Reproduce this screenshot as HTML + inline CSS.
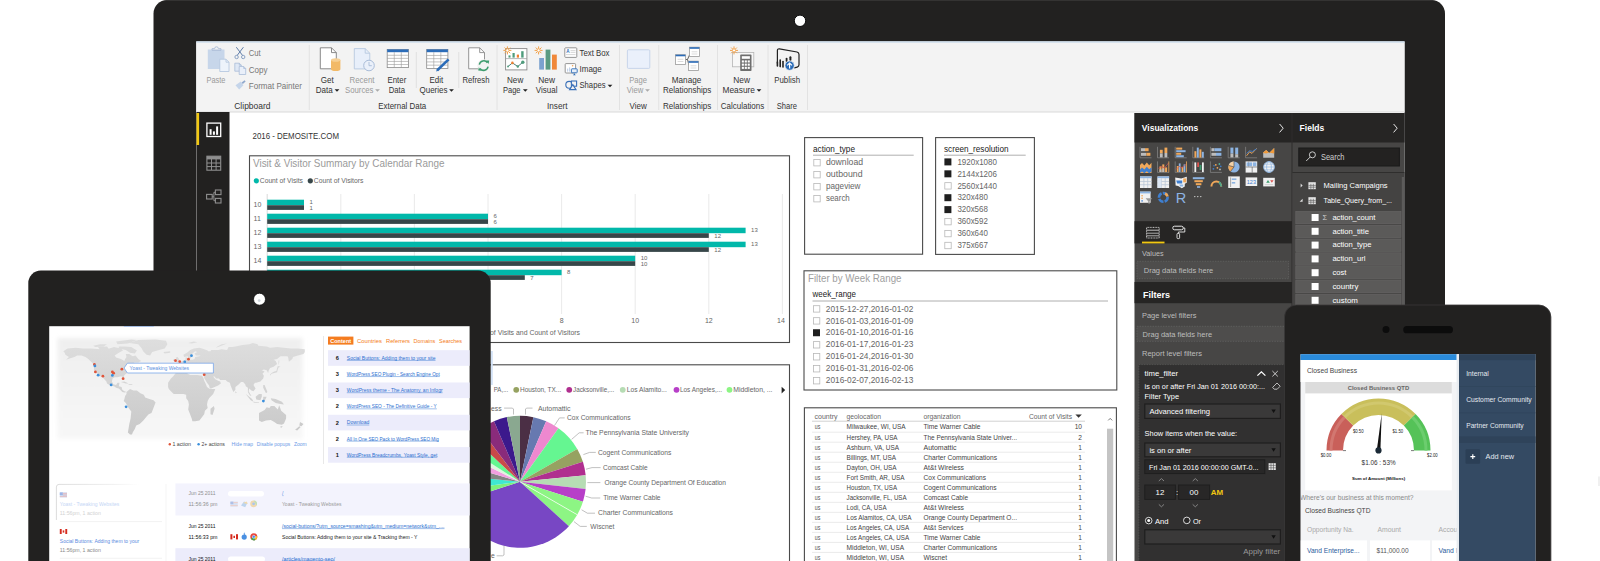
<!DOCTYPE html>
<html><head><meta charset="utf-8"><title>Dashboard devices</title>
<style>
html,body{margin:0;padding:0;background:#fff;overflow:hidden}
svg{display:block;font-family:"Liberation Sans", sans-serif}
text{white-space:pre}
</style></head><body>
<svg width="1600" height="561" viewBox="0 0 1600 561">
<rect width="1600" height="561" fill="#fff"/>
<!-- p1_frame -->
<rect x="153.5" y="0" width="1291.5" height="700" rx="13.5" fill="#222120"/>
<rect x="166.00" y="0.00" width="1266.00" height="1.00" fill="#343332"/>
<rect x="196.30" y="41.50" width="1208.20" height="600.00" fill="#fff"/>
<circle cx="800.00" cy="20.80" r="5.70" fill="#fff" stroke="#0a0a0a" stroke-width="1"/>
<rect x="196.30" y="41.50" width="1208.20" height="70.50" fill="#f3f3f3"/>
<rect x="196.30" y="41.50" width="1208.20" height="1.00" fill="#bcd3ea"/>
<rect x="196.50" y="111.50" width="1208.00" height="1.00" fill="#dadada"/>
<line x1="309.25" y1="45.00" x2="309.25" y2="110.00" stroke="#e2e2e2" stroke-width="1"/>
<line x1="497.00" y1="45.00" x2="497.00" y2="110.00" stroke="#e2e2e2" stroke-width="1"/>
<line x1="619.50" y1="45.00" x2="619.50" y2="110.00" stroke="#e2e2e2" stroke-width="1"/>
<line x1="658.75" y1="45.00" x2="658.75" y2="110.00" stroke="#e2e2e2" stroke-width="1"/>
<line x1="717.50" y1="45.00" x2="717.50" y2="110.00" stroke="#e2e2e2" stroke-width="1"/>
<line x1="768.00" y1="45.00" x2="768.00" y2="110.00" stroke="#e2e2e2" stroke-width="1"/>
<line x1="807.50" y1="45.00" x2="807.50" y2="110.00" stroke="#e2e2e2" stroke-width="1"/>
<line x1="416.25" y1="52.00" x2="416.25" y2="88.00" stroke="#e0e0e0" stroke-width="1"/>
<line x1="458.75" y1="52.00" x2="458.75" y2="88.00" stroke="#e0e0e0" stroke-width="1"/>
<text x="206.50" y="82.84" font-size="8.6" fill="#9a9a9a" textLength="19.00" lengthAdjust="spacingAndGlyphs">Paste</text>
<text x="248.75" y="55.84" font-size="8.6" fill="#777" textLength="12.00" lengthAdjust="spacingAndGlyphs">Cut</text>
<text x="248.75" y="72.54" font-size="8.6" fill="#777" textLength="18.75" lengthAdjust="spacingAndGlyphs">Copy</text>
<text x="248.75" y="88.84" font-size="8.6" fill="#777" textLength="53.25" lengthAdjust="spacingAndGlyphs">Format Painter</text>
<text x="234.25" y="109.14" font-size="8.6" fill="#333" textLength="36.25" lengthAdjust="spacingAndGlyphs">Clipboard</text>
<text x="320.75" y="82.84" font-size="8.6" fill="#333" textLength="13.00" lengthAdjust="spacingAndGlyphs">Get</text>
<text x="315.75" y="92.84" font-size="8.6" fill="#333" textLength="17.00" lengthAdjust="spacingAndGlyphs">Data</text>
<text x="349.50" y="82.84" font-size="8.6" fill="#9a9a9a" textLength="25.00" lengthAdjust="spacingAndGlyphs">Recent</text>
<text x="345.00" y="92.84" font-size="8.6" fill="#9a9a9a" textLength="28.50" lengthAdjust="spacingAndGlyphs">Sources</text>
<text x="387.50" y="82.84" font-size="8.6" fill="#333" textLength="18.75" lengthAdjust="spacingAndGlyphs">Enter</text>
<text x="388.75" y="92.84" font-size="8.6" fill="#333" textLength="16.25" lengthAdjust="spacingAndGlyphs">Data</text>
<text x="429.50" y="82.84" font-size="8.6" fill="#333" textLength="13.75" lengthAdjust="spacingAndGlyphs">Edit</text>
<text x="419.50" y="92.84" font-size="8.6" fill="#333" textLength="28.00" lengthAdjust="spacingAndGlyphs">Queries</text>
<text x="462.50" y="82.84" font-size="8.6" fill="#333" textLength="27.00" lengthAdjust="spacingAndGlyphs">Refresh</text>
<text x="378.25" y="109.14" font-size="8.6" fill="#333" textLength="48.00" lengthAdjust="spacingAndGlyphs">External Data</text>
<text x="507.00" y="82.84" font-size="8.6" fill="#333" textLength="16.25" lengthAdjust="spacingAndGlyphs">New</text>
<text x="503.00" y="92.84" font-size="8.6" fill="#333" textLength="17.50" lengthAdjust="spacingAndGlyphs">Page</text>
<text x="538.25" y="82.84" font-size="8.6" fill="#333" textLength="16.75" lengthAdjust="spacingAndGlyphs">New</text>
<text x="535.75" y="92.84" font-size="8.6" fill="#333" textLength="21.75" lengthAdjust="spacingAndGlyphs">Visual</text>
<text x="579.50" y="55.84" font-size="8.6" fill="#333" textLength="30.00" lengthAdjust="spacingAndGlyphs">Text Box</text>
<text x="579.50" y="72.34" font-size="8.6" fill="#333" textLength="22.25" lengthAdjust="spacingAndGlyphs">Image</text>
<text x="579.50" y="88.34" font-size="8.6" fill="#333" textLength="26.00" lengthAdjust="spacingAndGlyphs">Shapes</text>
<text x="547.00" y="109.14" font-size="8.6" fill="#333" textLength="20.50" lengthAdjust="spacingAndGlyphs">Insert</text>
<text x="629.25" y="82.84" font-size="8.6" fill="#9a9a9a" textLength="17.75" lengthAdjust="spacingAndGlyphs">Page</text>
<text x="626.75" y="92.84" font-size="8.6" fill="#9a9a9a" textLength="16.50" lengthAdjust="spacingAndGlyphs">View</text>
<text x="629.50" y="109.14" font-size="8.6" fill="#333" textLength="17.25" lengthAdjust="spacingAndGlyphs">View</text>
<text x="671.75" y="82.84" font-size="8.6" fill="#333" textLength="29.50" lengthAdjust="spacingAndGlyphs">Manage</text>
<text x="663.00" y="92.84" font-size="8.6" fill="#333" textLength="48.25" lengthAdjust="spacingAndGlyphs">Relationships</text>
<text x="663.00" y="109.14" font-size="8.6" fill="#333" textLength="48.25" lengthAdjust="spacingAndGlyphs">Relationships</text>
<text x="733.25" y="82.84" font-size="8.6" fill="#333" textLength="16.75" lengthAdjust="spacingAndGlyphs">New</text>
<text x="722.50" y="92.84" font-size="8.6" fill="#333" textLength="32.50" lengthAdjust="spacingAndGlyphs">Measure</text>
<text x="720.75" y="109.14" font-size="8.6" fill="#333" textLength="43.50" lengthAdjust="spacingAndGlyphs">Calculations</text>
<text x="774.25" y="82.84" font-size="8.6" fill="#333" textLength="25.75" lengthAdjust="spacingAndGlyphs">Publish</text>
<text x="776.75" y="109.14" font-size="8.6" fill="#333" textLength="20.25" lengthAdjust="spacingAndGlyphs">Share</text>
<path d="M334.60 89.30h4.8l-2.4 2.5z" fill="#222"/>
<path d="M375.10 89.30h4.8l-2.4 2.5z" fill="#aaa"/>
<path d="M449.10 89.30h4.8l-2.4 2.5z" fill="#222"/>
<path d="M522.90 89.30h4.8l-2.4 2.5z" fill="#222"/>
<path d="M607.60 84.80h4.8l-2.4 2.5z" fill="#222"/>
<path d="M645.10 89.30h4.8l-2.4 2.5z" fill="#aaa"/>
<path d="M756.60 89.30h4.8l-2.4 2.5z" fill="#222"/>
<rect x="196.50" y="112.00" width="33.00" height="530.00" fill="#222120"/>
<rect x="196.50" y="113.00" width="2.60" height="32.00" fill="#f2c811"/>
<!-- p1_icons -->
<rect x="207.80" y="49.50" width="16.70" height="19.50" fill="#c7d6ea"/>
<path d="M212 50.3v-1.6h2.6a1.9 1.9 0 0 1 3.8 0h2.6v1.6z" fill="none" stroke="#aebfd9" stroke-width="1"/>
<path d="M219.8 59.2h6.199999999999999l3 3v9.3h-9.2z" fill="#edf3fb" stroke="#b7c8e0" stroke-width="0.9"/><path d="M226.0 59.2v3h3" fill="none" stroke="#b7c8e0" stroke-width="0.9"/>
<path d="M236.3 47.2L242.6 55.5M243.4 47.2L237.1 55.5" stroke="#5f7da8" stroke-width="1" fill="none"/>
<circle cx="236.6" cy="57" r="1.7" fill="none" stroke="#7f98bd" stroke-width="0.9"/><circle cx="243.2" cy="57" r="1.7" fill="none" stroke="#7f98bd" stroke-width="0.9"/>
<path d="M234.8 63.2h4.5l2 2v6h-6.5z" fill="#dfe8f5" stroke="#a9bcd8" stroke-width="0.8"/><path d="M239.3 63.2v2h2" fill="none" stroke="#a9bcd8" stroke-width="0.8"/>
<path d="M239.2 66.5h4.5l2 2v6h-6.5z" fill="#e9eff9" stroke="#a9bcd8" stroke-width="0.8"/><path d="M243.7 66.5v2h2" fill="none" stroke="#a9bcd8" stroke-width="0.8"/>
<path d="M235.5 85.2l5.3-3.6 2.6 3.6-4.2 4.3z" fill="#c5d5ea"/><path d="M241.6 82.6l3-2.4 1 1.2-2.8 2.6z" fill="#8fa8cc"/>
<path d="M320.3 47.8h11.2l4.8 4.8v16.2h-16z" fill="#fff" stroke="#7d7d7d" stroke-width="0.9"/><path d="M331.5 47.8v4.8h4.8" fill="none" stroke="#7d7d7d" stroke-width="0.9"/>
<path d="M331 60v9.2a4.7 1.8 0 0 0 9.4 0v-9.2z" fill="#f2b967"/><ellipse cx="335.7" cy="60" rx="4.7" ry="1.8" fill="#f6cf94"/>
<path d="M354.3 48.6h10.9l4.6 4.6v15.700000000000001h-15.5z" fill="#e8effa" stroke="#b7c8e0" stroke-width="0.9"/><path d="M365.2 48.6v4.6h4.6" fill="none" stroke="#b7c8e0" stroke-width="0.9"/>
<circle cx="369" cy="65.5" r="5.3" fill="#eaf0fa" stroke="#a9bcd8" stroke-width="1"/><path d="M369 62v3.7h2.8" stroke="#a9bcd8" stroke-width="0.9" fill="none"/>
<rect x="387.20" y="49.40" width="21.20" height="18.20" fill="#fff" stroke="#8a8a8a" stroke-width="0.8"/><rect x="387.20" y="49.40" width="21.20" height="2.80" fill="#2b6cb8"/><line x1="387.20" y1="55.28" x2="408.40" y2="55.28" stroke="#9a9a9a" stroke-width="0.6"/><line x1="387.20" y1="58.36" x2="408.40" y2="58.36" stroke="#9a9a9a" stroke-width="0.6"/><line x1="387.20" y1="61.44" x2="408.40" y2="61.44" stroke="#9a9a9a" stroke-width="0.6"/><line x1="387.20" y1="64.52" x2="408.40" y2="64.52" stroke="#9a9a9a" stroke-width="0.6"/><line x1="394.27" y1="52.20" x2="394.27" y2="67.60" stroke="#9a9a9a" stroke-width="0.6"/><line x1="401.33" y1="52.20" x2="401.33" y2="67.60" stroke="#9a9a9a" stroke-width="0.6"/>
<rect x="426.70" y="49.40" width="21.20" height="19.00" fill="#fff" stroke="#8a8a8a" stroke-width="0.8"/><rect x="426.70" y="49.40" width="21.20" height="2.80" fill="#2b6cb8"/><line x1="426.70" y1="55.44" x2="447.90" y2="55.44" stroke="#9a9a9a" stroke-width="0.6"/><line x1="426.70" y1="58.68" x2="447.90" y2="58.68" stroke="#9a9a9a" stroke-width="0.6"/><line x1="426.70" y1="61.92" x2="447.90" y2="61.92" stroke="#9a9a9a" stroke-width="0.6"/><line x1="426.70" y1="65.16" x2="447.90" y2="65.16" stroke="#9a9a9a" stroke-width="0.6"/><line x1="433.77" y1="52.20" x2="433.77" y2="68.40" stroke="#9a9a9a" stroke-width="0.6"/><line x1="440.83" y1="52.20" x2="440.83" y2="68.40" stroke="#9a9a9a" stroke-width="0.6"/>
<path d="M437.3 70.2L448.6 59.4" stroke="#2b6cb8" stroke-width="2.6" stroke-linecap="butt"/><path d="M436.2 71.4l0.6-2.2 1.7 1.6z" fill="#2b6cb8"/>
<path d="M468.7 47.8h11.0l4.8 4.8v16.2h-15.8z" fill="#fff" stroke="#8a8a8a" stroke-width="0.9"/><path d="M479.7 47.8v4.8h4.8" fill="none" stroke="#8a8a8a" stroke-width="0.9"/>
<circle cx="483.7" cy="65.6" r="6.4" fill="#f3f3f3"/>
<path d="M479.3 64.6a4.6 4.6 0 0 1 8.2 -1.9M488.1 66.6a4.6 4.6 0 0 1 -8.2 1.9" stroke="#3d9c6e" stroke-width="1.5" fill="none"/>
<path d="M486.2 60.4l3 0.2-0.6 3.4z" fill="#3d9c6e"/><path d="M481.2 70.8l-3-0.2 0.6-3.4z" fill="#3d9c6e"/>
<rect x="505.60" y="48.60" width="21.30" height="21.30" fill="#fff" stroke="#8a8a8a" stroke-width="0.9"/>
<line x1="505.60" y1="58.60" x2="526.90" y2="58.60" stroke="#9a9a9a" stroke-width="0.7"/>
<rect x="512.50" y="53.00" width="2.20" height="4.60" fill="#4f9c7c"/><rect x="516.80" y="54.60" width="2.20" height="3.00" fill="#f08030"/><rect x="521.20" y="51.20" width="2.40" height="6.40" fill="#4f9c7c"/><rect x="508.50" y="55.40" width="2.00" height="2.20" fill="#4f9c7c"/>
<path d="M508 66.5l4.4-3.6 5.4 3.6 5-4.3" stroke="#4a7f78" stroke-width="1" fill="none"/>
<circle cx="512.40" cy="62.90" r="1.30" fill="#f08030"/><circle cx="517.80" cy="66.50" r="1.20" fill="#4f9c7c"/><circle cx="522.80" cy="62.20" r="1.70" fill="#4f9c7c"/><circle cx="508.00" cy="66.50" r="0.90" fill="#4f9c7c"/>
<path d="M509.00 50.40L511.40 50.40M508.53 51.53L510.23 53.23M507.40 52.00L507.40 54.40M506.27 51.53L504.57 53.23M505.80 50.40L503.40 50.40M506.27 49.27L504.57 47.57M507.40 48.80L507.40 46.40M508.53 49.27L510.23 47.57" stroke="#f2a24a" stroke-width="1" fill="none"/><circle cx="507.4" cy="50.4" r="1.6" fill="#fff" stroke="#f2a24a" stroke-width="0.9"/>
<rect x="539.20" y="58.00" width="4.80" height="11.60" fill="#7ca2cf"/><rect x="545.60" y="49.60" width="4.80" height="20.00" fill="#5a9b82"/><rect x="552.00" y="54.60" width="4.80" height="15.00" fill="#f0883a"/>
<path d="M540.20 50.40L542.60 50.40M539.73 51.53L541.43 53.23M538.60 52.00L538.60 54.40M537.47 51.53L535.77 53.23M537.00 50.40L534.60 50.40M537.47 49.27L535.77 47.57M538.60 48.80L538.60 46.40M539.73 49.27L541.43 47.57" stroke="#f2a24a" stroke-width="1" fill="none"/><circle cx="538.6" cy="50.4" r="1.6" fill="#fff" stroke="#f2a24a" stroke-width="0.9"/>
<rect x="564.80" y="47.80" width="12.00" height="9.60" fill="#fff" stroke="#8a8a8a" stroke-width="0.9" rx="0.8"/>
<text x="566.20" y="53.20" font-size="4.6" fill="#2b6cb8" font-weight="bold">A</text>
<line x1="570.50" y1="50.60" x2="575.50" y2="50.60" stroke="#c7c7c7" stroke-width="0.7"/><line x1="570.50" y1="52.40" x2="575.50" y2="52.40" stroke="#c7c7c7" stroke-width="0.7"/><line x1="566.00" y1="54.60" x2="575.50" y2="54.60" stroke="#c7c7c7" stroke-width="0.7"/>
<rect x="565.20" y="63.60" width="10.40" height="9.40" fill="#fff" stroke="#8a8a8a" stroke-width="0.9" rx="0.8"/>
<circle cx="572.60" cy="65.80" r="0.80" fill="#f0a050"/><rect x="567.00" y="68.60" width="1.20" height="3.00" fill="#c3d3ea"/><rect x="569.00" y="67.40" width="1.20" height="4.20" fill="#c3d3ea"/>
<rect x="571.40" y="68.80" width="5.80" height="4.00" fill="#e6eef9" stroke="#2b6cb8" stroke-width="0.9" rx="0.6"/><path d="M573 75.2h2.8l-1.4-1.8z" fill="#2b6cb8"/>
<circle cx="569.20" cy="84.80" r="3.40" fill="none" stroke="#3a70b8" stroke-width="1.1"/>
<rect x="571.40" y="81.00" width="5.20" height="5.20" fill="#f3f3f3" stroke="#3a70b8" stroke-width="1.1"/>
<path d="M569.6 89.6l3.2-5 3.2 5z" fill="#f3f3f3" stroke="#3a70b8" stroke-width="1.1"/>
<rect x="627.40" y="49.80" width="22.40" height="18.60" fill="#eaf0fb" stroke="#c3d1e9" stroke-width="0.9" rx="1"/>
<path d="M685.5 59.5h2l2-4.5M687.5 59.5l1.5 5.8" stroke="#555" stroke-width="0.9" fill="none"/>
<rect x="675.60" y="54.70" width="9.80" height="9.70" fill="#fff" stroke="#9a9a9a" stroke-width="0.8"/><rect x="675.60" y="54.70" width="9.80" height="1.60" fill="#2b6cb8"/><line x1="677.60" y1="59.30" x2="683.40" y2="59.30" stroke="#ccc" stroke-width="0.7"/><line x1="677.60" y1="61.50" x2="683.40" y2="61.50" stroke="#ccc" stroke-width="0.7"/><rect x="689.60" y="47.20" width="9.80" height="9.30" fill="#fff" stroke="#9a9a9a" stroke-width="0.8"/><rect x="689.60" y="47.20" width="9.80" height="1.60" fill="#2b6cb8"/><line x1="691.60" y1="51.80" x2="697.40" y2="51.80" stroke="#ccc" stroke-width="0.7"/><line x1="691.60" y1="54.00" x2="697.40" y2="54.00" stroke="#ccc" stroke-width="0.7"/><rect x="688.60" y="61.20" width="9.80" height="9.30" fill="#fff" stroke="#9a9a9a" stroke-width="0.8"/><rect x="688.60" y="61.20" width="9.80" height="1.60" fill="#2b6cb8"/><line x1="690.60" y1="65.80" x2="696.40" y2="65.80" stroke="#ccc" stroke-width="0.7"/><line x1="690.60" y1="68.00" x2="696.40" y2="68.00" stroke="#ccc" stroke-width="0.7"/>
<rect x="732.40" y="52.40" width="21.40" height="14.40" fill="#f7f7f7" stroke="#b5b5b5" stroke-width="0.8"/>
<rect x="740.20" y="54.60" width="11.30" height="16.40" fill="#6e6e6e" rx="0.8"/>
<rect x="741.80" y="56.20" width="8.10" height="2.60" fill="#fff"/>
<rect x="741.80" y="60.40" width="2.10" height="2.10" fill="#fff"/>
<rect x="744.75" y="60.40" width="2.10" height="2.10" fill="#fff"/>
<rect x="747.70" y="60.40" width="2.10" height="2.10" fill="#fff"/>
<rect x="741.80" y="63.60" width="2.10" height="2.10" fill="#fff"/>
<rect x="744.75" y="63.60" width="2.10" height="2.10" fill="#fff"/>
<rect x="747.70" y="63.60" width="2.10" height="2.10" fill="#fff"/>
<rect x="741.80" y="66.80" width="2.10" height="2.10" fill="#fff"/>
<rect x="744.75" y="66.80" width="2.10" height="2.10" fill="#fff"/>
<rect x="747.70" y="66.80" width="2.10" height="2.10" fill="#fff"/>
<path d="M735.60 50.40L738.00 50.40M735.13 51.53L736.83 53.23M734.00 52.00L734.00 54.40M732.87 51.53L731.17 53.23M732.40 50.40L730.00 50.40M732.87 49.27L731.17 47.57M734.00 48.80L734.00 46.40M735.13 49.27L736.83 47.57" stroke="#f2a24a" stroke-width="1" fill="none"/><circle cx="734" cy="50.4" r="1.6" fill="#fff" stroke="#f2a24a" stroke-width="0.9"/>
<path d="M777.4 63.5V50.6q0-2 2-1.8l17.6 3.2q2 .5 2 2.4v10.4q0 1.8-1.8 2.3l-3 .8" fill="none" stroke="#222" stroke-width="1.2"/>
<line x1="777.40" y1="62.00" x2="777.40" y2="66.00" stroke="#222" stroke-width="1.6" stroke-linecap="round"/><line x1="780.20" y1="60.00" x2="780.20" y2="66.60" stroke="#222" stroke-width="1.6" stroke-linecap="round"/><line x1="783.00" y1="61.50" x2="783.00" y2="67.00" stroke="#222" stroke-width="1.6" stroke-linecap="round"/>
<line x1="786.60" y1="58.60" x2="786.60" y2="61.00" stroke="#222" stroke-width="1.8" stroke-linecap="round"/><line x1="790.40" y1="57.20" x2="790.40" y2="60.00" stroke="#222" stroke-width="2" stroke-linecap="round"/>
<circle cx="789.60" cy="65.60" r="4.70" fill="#2b6cb8" stroke="#f3f3f3" stroke-width="0.8"/>
<path d="M789.6 68.6v-5.4M787.2 65.4l2.4-2.4 2.4 2.4" stroke="#fff" stroke-width="1.2" fill="none"/>
<rect x="206.90" y="123.10" width="13.80" height="13.40" fill="none" stroke="#fff" stroke-width="1.3"/>
<rect x="209.60" y="129.20" width="2.00" height="5.60" fill="#fff"/><rect x="212.90" y="131.40" width="2.00" height="3.40" fill="#fff"/><rect x="216.10" y="126.40" width="2.00" height="8.40" fill="#fff"/>
<rect x="206.90" y="156.20" width="13.80" height="14.00" fill="none" stroke="#8f8f8f" stroke-width="1.1"/><rect x="206.90" y="156.20" width="13.80" height="3.20" fill="#8f8f8f"/>
<line x1="206.90" y1="163.00" x2="220.70" y2="163.00" stroke="#8f8f8f" stroke-width="1"/><line x1="206.90" y1="166.60" x2="220.70" y2="166.60" stroke="#8f8f8f" stroke-width="1"/><line x1="211.50" y1="159.00" x2="211.50" y2="170.00" stroke="#8f8f8f" stroke-width="1"/><line x1="216.10" y1="159.00" x2="216.10" y2="170.00" stroke="#8f8f8f" stroke-width="1"/>
<rect x="206.60" y="194.40" width="5.60" height="4.60" fill="none" stroke="#8f8f8f" stroke-width="1.1"/><rect x="215.40" y="190.00" width="5.60" height="4.60" fill="none" stroke="#8f8f8f" stroke-width="1.1"/><rect x="215.40" y="198.40" width="5.60" height="4.60" fill="none" stroke="#8f8f8f" stroke-width="1.1"/>
<path d="M212.2 196.7h1.7v-4.4h1.5M213.9 196.7v4h1.5" stroke="#8f8f8f" stroke-width="1" fill="none"/>
<!-- p2_charts -->
<text x="252.50" y="139.04" font-size="8.6" fill="#333" textLength="86.50" lengthAdjust="spacingAndGlyphs">2016 - DEMOSITE.COM</text>
<rect x="249.50" y="155.80" width="540.00" height="186.70" fill="#fff" stroke="#4a4a4a" stroke-width="1.1"/>
<text x="253.00" y="166.63" font-size="11" fill="#9a9a9a" textLength="191.50" lengthAdjust="spacingAndGlyphs">Visit &amp; Visitor Summary by Calendar Range</text>
<circle cx="256.30" cy="180.80" r="2.60" fill="#01b8aa"/><text x="259.80" y="182.98" font-size="6.6" fill="#666" textLength="43.20" lengthAdjust="spacingAndGlyphs">Count of Visits</text>
<circle cx="310.30" cy="180.80" r="2.60" fill="#374649"/><text x="313.80" y="182.98" font-size="6.6" fill="#666" textLength="49.60" lengthAdjust="spacingAndGlyphs">Count of Visitors</text>
<line x1="267.20" y1="194.00" x2="267.20" y2="314.00" stroke="#cfcfcf" stroke-width="0.8"/>
<line x1="340.80" y1="194.00" x2="340.80" y2="314.00" stroke="#e4e4e4" stroke-width="0.8"/>
<line x1="414.40" y1="194.00" x2="414.40" y2="314.00" stroke="#e4e4e4" stroke-width="0.8"/>
<line x1="488.00" y1="194.00" x2="488.00" y2="314.00" stroke="#e4e4e4" stroke-width="0.8"/>
<line x1="561.60" y1="194.00" x2="561.60" y2="314.00" stroke="#e4e4e4" stroke-width="0.8"/>
<line x1="635.20" y1="194.00" x2="635.20" y2="314.00" stroke="#e4e4e4" stroke-width="0.8"/>
<line x1="708.80" y1="194.00" x2="708.80" y2="314.00" stroke="#e4e4e4" stroke-width="0.8"/>
<line x1="782.40" y1="194.00" x2="782.40" y2="314.00" stroke="#e4e4e4" stroke-width="0.8"/>
<text x="561.60" y="322.61" font-size="7" fill="#666" text-anchor="middle">8</text>
<text x="635.20" y="322.61" font-size="7" fill="#666" text-anchor="middle">10</text>
<text x="708.80" y="322.61" font-size="7" fill="#666" text-anchor="middle">12</text>
<text x="780.90" y="322.61" font-size="7" fill="#666" text-anchor="middle">14</text>
<text x="490.00" y="335.31" font-size="7" fill="#666" textLength="90.00" lengthAdjust="spacingAndGlyphs">of Visits and Count of Visitors</text>
<rect x="267.20" y="199.70" width="36.80" height="5.50" fill="#01b8aa"/>
<rect x="267.20" y="205.20" width="36.80" height="4.70" fill="#374649"/>
<text x="253.60" y="207.21" font-size="7" fill="#666">10</text>
<text x="309.50" y="203.88" font-size="6" fill="#666">1</text>
<text x="309.50" y="210.08" font-size="6" fill="#666">1</text>
<rect x="267.20" y="213.70" width="220.80" height="5.50" fill="#01b8aa"/>
<rect x="267.20" y="219.20" width="220.80" height="4.70" fill="#374649"/>
<text x="253.60" y="221.21" font-size="7" fill="#666">11</text>
<text x="493.50" y="217.88" font-size="6" fill="#666">6</text>
<text x="493.50" y="224.08" font-size="6" fill="#666">6</text>
<rect x="267.20" y="227.70" width="478.40" height="5.50" fill="#01b8aa"/>
<rect x="267.20" y="233.20" width="441.60" height="4.70" fill="#374649"/>
<text x="253.60" y="235.21" font-size="7" fill="#666">12</text>
<text x="751.10" y="231.88" font-size="6" fill="#666">13</text>
<text x="714.30" y="238.08" font-size="6" fill="#666">12</text>
<rect x="267.20" y="241.70" width="478.40" height="5.50" fill="#01b8aa"/>
<rect x="267.20" y="247.20" width="441.60" height="4.70" fill="#374649"/>
<text x="253.60" y="249.21" font-size="7" fill="#666">13</text>
<text x="751.10" y="245.88" font-size="6" fill="#666">13</text>
<text x="714.30" y="252.08" font-size="6" fill="#666">12</text>
<rect x="267.20" y="255.70" width="368.00" height="5.50" fill="#01b8aa"/>
<rect x="267.20" y="261.20" width="368.00" height="4.70" fill="#374649"/>
<text x="253.60" y="263.21" font-size="7" fill="#666">14</text>
<text x="640.70" y="259.88" font-size="6" fill="#666">10</text>
<text x="640.70" y="266.08" font-size="6" fill="#666">10</text>
<rect x="267.20" y="269.70" width="294.40" height="5.50" fill="#01b8aa"/>
<rect x="267.20" y="275.20" width="257.60" height="4.70" fill="#374649"/>
<text x="253.60" y="277.21" font-size="7" fill="#666">15</text>
<text x="567.10" y="273.88" font-size="6" fill="#666">8</text>
<text x="530.30" y="280.08" font-size="6" fill="#666">7</text>
<rect x="267.20" y="283.70" width="184.00" height="5.50" fill="#01b8aa"/>
<rect x="267.20" y="289.20" width="184.00" height="4.70" fill="#374649"/>
<text x="253.60" y="291.21" font-size="7" fill="#666">16</text>
<text x="456.70" y="287.88" font-size="6" fill="#666">5</text>
<text x="456.70" y="294.08" font-size="6" fill="#666">5</text>
<rect x="249.50" y="364.80" width="540.00" height="260.00" fill="#fff" stroke="#4a4a4a" stroke-width="1.1"/>
<rect x="491.00" y="351.00" width="1.80" height="34.00" fill="#d3e2f6"/>
<text x="493.75" y="392.11" font-size="7" fill="#666" textLength="14.50" lengthAdjust="spacingAndGlyphs">PA,...</text>
<circle cx="516.25" cy="389.80" r="2.90" fill="#96a261"/><text x="520.00" y="392.11" font-size="7" fill="#666" textLength="41.25" lengthAdjust="spacingAndGlyphs">Houston, TX...</text>
<circle cx="569.25" cy="389.80" r="2.90" fill="#b02f8f"/><text x="573.00" y="392.11" font-size="7" fill="#666" textLength="41.25" lengthAdjust="spacingAndGlyphs">Jacksonville,...</text>
<circle cx="622.75" cy="389.80" r="2.90" fill="#b6dcb4"/><text x="626.75" y="392.11" font-size="7" fill="#666" textLength="40.00" lengthAdjust="spacingAndGlyphs">Los Alamito...</text>
<circle cx="676.50" cy="389.80" r="2.90" fill="#b73fc8"/><text x="680.00" y="392.11" font-size="7" fill="#666" textLength="42.00" lengthAdjust="spacingAndGlyphs">Los Angeles,...</text>
<circle cx="729.50" cy="389.80" r="2.90" fill="#8df584"/><text x="733.25" y="392.11" font-size="7" fill="#666" textLength="39.25" lengthAdjust="spacingAndGlyphs">Middleton, ...</text>
<path d="M781.6 386.8l3.6 3.3-3.6 3.3z" fill="#222"/>
<path d="M520.00 481.80L520.00 415.80A66 66 0 0 1 533.38 417.17z" fill="#4b2f45"/>
<path d="M520.00 481.80L533.38 417.17A66 66 0 0 1 546.21 421.23z" fill="#6779b0"/>
<path d="M520.00 481.80L546.21 421.23A66 66 0 0 1 558.51 428.20z" fill="#ee88cf"/>
<path d="M520.00 481.80L558.51 428.20A66 66 0 0 1 577.22 448.90z" fill="#65f691"/>
<path d="M520.00 481.80L577.22 448.90A66 66 0 0 1 582.91 461.84z" fill="#96a261"/>
<path d="M520.00 481.80L582.91 461.84A66 66 0 0 1 585.67 475.24z" fill="#b02f8f"/>
<path d="M520.00 481.80L585.67 475.24A66 66 0 0 1 585.61 488.93z" fill="#b6dcb4"/>
<path d="M520.00 481.80L585.61 488.93A66 66 0 0 1 582.91 501.76z" fill="#b73fc8"/>
<path d="M520.00 481.80L582.91 501.76A66 66 0 0 1 577.22 514.70z" fill="#8df584"/>
<path d="M520.00 481.80L577.22 514.70A66 66 0 0 1 568.89 526.13z" fill="#8df584"/>
<path d="M520.00 481.80L568.89 526.13A66 66 0 0 1 457.23 502.20z" fill="#7847c4"/>
<path d="M520.00 481.80L457.23 502.20A66 66 0 0 1 454.53 490.19z" fill="#7df07c"/>
<path d="M520.00 481.80L454.53 490.19A66 66 0 0 1 454.33 475.24z" fill="#3fe8d2"/>
<path d="M520.00 481.80L454.33 475.24A66 66 0 0 1 456.72 463.05z" fill="#858585"/>
<path d="M520.00 481.80L456.72 463.05A66 66 0 0 1 460.68 452.87z" fill="#f19fe0"/>
<path d="M520.00 481.80L460.68 452.87A66 66 0 0 1 464.46 446.14z" fill="#dff6df"/>
<path d="M520.00 481.80L464.46 446.14A66 66 0 0 1 471.73 436.79z" fill="#65f691"/>
<path d="M520.00 481.80L471.73 436.79A66 66 0 0 1 480.28 429.09z" fill="#c94a48"/>
<path d="M520.00 481.80L480.28 429.09A66 66 0 0 1 494.00 421.14z" fill="#8a2b7b"/>
<path d="M520.00 481.80L494.00 421.14A66 66 0 0 1 506.84 417.12z" fill="#3c198c"/>
<path d="M520.00 481.80L506.84 417.12A66 66 0 0 1 520.00 415.80z" fill="#8aa890"/>
<line x1="520.00" y1="481.80" x2="577.22" y2="514.70" stroke="#fff" stroke-width="0.7"/>
<text x="538.00" y="410.64" font-size="6.8" fill="#666" textLength="32.50" lengthAdjust="spacingAndGlyphs">Automattic</text>
<text x="567.00" y="419.94" font-size="6.8" fill="#666" textLength="63.50" lengthAdjust="spacingAndGlyphs">Cox Communications</text>
<text x="585.50" y="434.84" font-size="6.8" fill="#666" textLength="103.50" lengthAdjust="spacingAndGlyphs">The Pennsylvania State University</text>
<text x="598.00" y="454.54" font-size="6.8" fill="#666" textLength="73.30" lengthAdjust="spacingAndGlyphs">Cogent Communications</text>
<text x="603.00" y="469.64" font-size="6.8" fill="#666" textLength="44.70" lengthAdjust="spacingAndGlyphs">Comcast Cable</text>
<text x="604.50" y="484.84" font-size="6.8" fill="#666" textLength="121.50" lengthAdjust="spacingAndGlyphs">Orange County Department Of Education</text>
<text x="603.20" y="500.24" font-size="6.8" fill="#666" textLength="57.40" lengthAdjust="spacingAndGlyphs">Time Warner Cable</text>
<text x="598.00" y="515.44" font-size="6.8" fill="#666" textLength="75.00" lengthAdjust="spacingAndGlyphs">Charter Communications</text>
<text x="590.30" y="528.74" font-size="6.8" fill="#666" textLength="24.00" lengthAdjust="spacingAndGlyphs">Wiscnet</text>
<text x="491.00" y="410.64" font-size="6.8" fill="#666">ess</text>
<path d="M525.5 414.5v-5.6l1.4-.8h5.6" fill="none" stroke="#a6a6a6" stroke-width="0.7"/>
<path d="M554.5 425.5l5-7.6h5.2" fill="none" stroke="#a6a6a6" stroke-width="0.7"/>
<path d="M571.6 439.4l7.6-6.6h4.4" fill="none" stroke="#a6a6a6" stroke-width="0.7"/>
<path d="M583.4 454.6l6.2-2.2h6.2" fill="none" stroke="#a6a6a6" stroke-width="0.7"/>
<path d="M586 469.2l6-1.6h8.6" fill="none" stroke="#a6a6a6" stroke-width="0.7"/>
<path d="M587.4 482.6h13" fill="none" stroke="#a6a6a6" stroke-width="0.7"/>
<path d="M585.6 496.2l6 1.8h8.6" fill="none" stroke="#a6a6a6" stroke-width="0.7"/>
<path d="M581.6 509.8l5.8 3.4h7.6" fill="none" stroke="#a6a6a6" stroke-width="0.7"/>
<path d="M574 521.6l6.2 4.8h6.6" fill="none" stroke="#a6a6a6" stroke-width="0.7"/>
<path d="M513.5 414.5v-5.6l-1.4-.8h-8" fill="none" stroke="#a6a6a6" stroke-width="0.7"/>
<path d="M504 545.6v9.4l-1.4.8h-6" fill="none" stroke="#a6a6a6" stroke-width="0.7"/>
<text x="491.00" y="558.04" font-size="6.8" fill="#666">e</text>
<!-- p3_slicers -->
<rect x="804.60" y="137.60" width="118.00" height="116.60" fill="#fff" stroke="#4a4a4a" stroke-width="1.1"/>
<text x="813.00" y="152.04" font-size="8.6" fill="#222" textLength="42.00" lengthAdjust="spacingAndGlyphs">action_type</text>
<line x1="813.00" y1="155.20" x2="913.70" y2="155.20" stroke="#9a9a9a" stroke-width="0.8"/>
<rect x="813.80" y="159.50" width="6.40" height="6.40" fill="#fff" stroke="#b8b8b8" stroke-width="0.8"/>
<text x="826.00" y="165.34" font-size="8.6" fill="#666" textLength="37.00" lengthAdjust="spacingAndGlyphs">download</text>
<rect x="813.80" y="171.50" width="6.40" height="6.40" fill="#fff" stroke="#b8b8b8" stroke-width="0.8"/>
<text x="826.00" y="177.34" font-size="8.6" fill="#666" textLength="36.50" lengthAdjust="spacingAndGlyphs">outbound</text>
<rect x="813.80" y="183.50" width="6.40" height="6.40" fill="#fff" stroke="#b8b8b8" stroke-width="0.8"/>
<text x="826.00" y="189.34" font-size="8.6" fill="#666" textLength="34.50" lengthAdjust="spacingAndGlyphs">pageview</text>
<rect x="813.80" y="195.50" width="6.40" height="6.40" fill="#fff" stroke="#b8b8b8" stroke-width="0.8"/>
<text x="826.00" y="201.34" font-size="8.6" fill="#666" textLength="23.75" lengthAdjust="spacingAndGlyphs">search</text>
<rect x="935.60" y="137.60" width="98.80" height="116.80" fill="#fff" stroke="#4a4a4a" stroke-width="1.1"/>
<text x="944.00" y="152.04" font-size="8.6" fill="#222" textLength="64.50" lengthAdjust="spacingAndGlyphs">screen_resolution</text>
<line x1="944.00" y1="155.20" x2="1025.70" y2="155.20" stroke="#9a9a9a" stroke-width="0.8"/>
<rect x="944.40" y="158.40" width="7.00" height="7.00" fill="#1f1f1f"/>
<text x="957.40" y="164.64" font-size="8.6" fill="#666" textLength="39.50" lengthAdjust="spacingAndGlyphs">1920x1080</text>
<rect x="944.40" y="170.33" width="7.00" height="7.00" fill="#1f1f1f"/>
<text x="957.40" y="176.57" font-size="8.6" fill="#666" textLength="39.50" lengthAdjust="spacingAndGlyphs">2144x1206</text>
<rect x="944.80" y="182.66" width="6.40" height="6.40" fill="#fff" stroke="#b8b8b8" stroke-width="0.8"/>
<text x="957.40" y="188.50" font-size="8.6" fill="#666" textLength="39.50" lengthAdjust="spacingAndGlyphs">2560x1440</text>
<rect x="944.40" y="194.19" width="7.00" height="7.00" fill="#1f1f1f"/>
<text x="957.40" y="200.43" font-size="8.6" fill="#666" textLength="30.50" lengthAdjust="spacingAndGlyphs">320x480</text>
<rect x="944.40" y="206.12" width="7.00" height="7.00" fill="#1f1f1f"/>
<text x="957.40" y="212.36" font-size="8.6" fill="#666" textLength="30.50" lengthAdjust="spacingAndGlyphs">320x568</text>
<rect x="944.80" y="218.45" width="6.40" height="6.40" fill="#fff" stroke="#b8b8b8" stroke-width="0.8"/>
<text x="957.40" y="224.29" font-size="8.6" fill="#666" textLength="30.50" lengthAdjust="spacingAndGlyphs">360x592</text>
<rect x="944.80" y="230.38" width="6.40" height="6.40" fill="#fff" stroke="#b8b8b8" stroke-width="0.8"/>
<text x="957.40" y="236.22" font-size="8.6" fill="#666" textLength="30.50" lengthAdjust="spacingAndGlyphs">360x640</text>
<rect x="944.80" y="242.31" width="6.40" height="6.40" fill="#fff" stroke="#b8b8b8" stroke-width="0.8"/>
<text x="957.40" y="248.15" font-size="8.6" fill="#666" textLength="30.50" lengthAdjust="spacingAndGlyphs">375x667</text>
<rect x="804.00" y="270.80" width="312.80" height="119.20" fill="#fff" stroke="#4a4a4a" stroke-width="1.1"/>
<text x="808.00" y="281.90" font-size="10.6" fill="#a0a0a0" textLength="93.50" lengthAdjust="spacingAndGlyphs">Filter by Week Range</text>
<text x="812.50" y="297.44" font-size="8.6" fill="#222" textLength="43.50" lengthAdjust="spacingAndGlyphs">week_range</text>
<line x1="812.50" y1="301.00" x2="1108.00" y2="301.00" stroke="#9a9a9a" stroke-width="0.8"/>
<rect x="813.40" y="305.70" width="6.40" height="6.40" fill="#fff" stroke="#b8b8b8" stroke-width="0.8"/>
<text x="825.80" y="311.54" font-size="8.6" fill="#666" textLength="87.50" lengthAdjust="spacingAndGlyphs">2015-12-27,2016-01-02</text>
<rect x="813.40" y="317.67" width="6.40" height="6.40" fill="#fff" stroke="#b8b8b8" stroke-width="0.8"/>
<text x="825.80" y="323.51" font-size="8.6" fill="#666" textLength="87.50" lengthAdjust="spacingAndGlyphs">2016-01-03,2016-01-09</text>
<rect x="813.00" y="329.24" width="7.00" height="7.00" fill="#1f1f1f"/>
<text x="825.80" y="335.48" font-size="8.6" fill="#666" textLength="87.50" lengthAdjust="spacingAndGlyphs">2016-01-10,2016-01-16</text>
<rect x="813.40" y="341.61" width="6.40" height="6.40" fill="#fff" stroke="#b8b8b8" stroke-width="0.8"/>
<text x="825.80" y="347.45" font-size="8.6" fill="#666" textLength="87.50" lengthAdjust="spacingAndGlyphs">2016-01-17,2016-01-23</text>
<rect x="813.40" y="353.58" width="6.40" height="6.40" fill="#fff" stroke="#b8b8b8" stroke-width="0.8"/>
<text x="825.80" y="359.42" font-size="8.6" fill="#666" textLength="87.50" lengthAdjust="spacingAndGlyphs">2016-01-24,2016-01-30</text>
<rect x="813.40" y="365.55" width="6.40" height="6.40" fill="#fff" stroke="#b8b8b8" stroke-width="0.8"/>
<text x="825.80" y="371.39" font-size="8.6" fill="#666" textLength="87.50" lengthAdjust="spacingAndGlyphs">2016-01-31,2016-02-06</text>
<rect x="813.40" y="377.52" width="6.40" height="6.40" fill="#fff" stroke="#b8b8b8" stroke-width="0.8"/>
<text x="825.80" y="383.36" font-size="8.6" fill="#666" textLength="87.50" lengthAdjust="spacingAndGlyphs">2016-02-07,2016-02-13</text>
<rect x="804.40" y="407.80" width="312.00" height="200.00" fill="#fff" stroke="#4a4a4a" stroke-width="1.1"/>
<text x="814.50" y="418.78" font-size="6.6" fill="#666" textLength="23.00" lengthAdjust="spacingAndGlyphs">country</text>
<text x="846.60" y="418.78" font-size="6.6" fill="#666" textLength="34.50" lengthAdjust="spacingAndGlyphs">geolocation</text>
<text x="923.50" y="418.78" font-size="6.6" fill="#666" textLength="37.00" lengthAdjust="spacingAndGlyphs">organization</text>
<text x="1029.00" y="418.78" font-size="6.6" fill="#666" textLength="43.00" lengthAdjust="spacingAndGlyphs">Count of Visits</text>
<path d="M1075.4 414.6h6.4l-3.2 3.2z" fill="#333"/>
<line x1="812.00" y1="421.20" x2="1085.00" y2="421.20" stroke="#bdbdbd" stroke-width="0.7"/>
<text x="814.80" y="429.48" font-size="6.6" fill="#555" textLength="5.60" lengthAdjust="spacingAndGlyphs">us</text>
<text x="846.60" y="429.48" font-size="6.6" fill="#444" textLength="59.00" lengthAdjust="spacingAndGlyphs">Milwaukee, WI, USA</text>
<text x="923.50" y="429.48" font-size="6.6" fill="#444" textLength="57.00" lengthAdjust="spacingAndGlyphs">Time Warner Cable</text>
<text x="1082.00" y="429.48" font-size="6.6" fill="#444" text-anchor="end">10</text>
<line x1="812.00" y1="432.20" x2="1085.00" y2="432.20" stroke="#e3e3e3" stroke-width="0.7"/>
<text x="814.80" y="439.50" font-size="6.6" fill="#555" textLength="5.60" lengthAdjust="spacingAndGlyphs">us</text>
<text x="846.60" y="439.50" font-size="6.6" fill="#444" textLength="51.00" lengthAdjust="spacingAndGlyphs">Hershey, PA, USA</text>
<text x="923.50" y="439.50" font-size="6.6" fill="#444" textLength="93.50" lengthAdjust="spacingAndGlyphs">The Pennsylvania State Univer...</text>
<text x="1082.00" y="439.50" font-size="6.6" fill="#444" text-anchor="end">2</text>
<line x1="812.00" y1="442.22" x2="1085.00" y2="442.22" stroke="#e3e3e3" stroke-width="0.7"/>
<text x="814.80" y="449.52" font-size="6.6" fill="#555" textLength="5.60" lengthAdjust="spacingAndGlyphs">us</text>
<text x="846.60" y="449.52" font-size="6.6" fill="#444" textLength="52.50" lengthAdjust="spacingAndGlyphs">Ashburn, VA, USA</text>
<text x="923.50" y="449.52" font-size="6.6" fill="#444" textLength="33.00" lengthAdjust="spacingAndGlyphs">Automattic</text>
<text x="1082.00" y="449.52" font-size="6.6" fill="#444" text-anchor="end">1</text>
<line x1="812.00" y1="452.24" x2="1085.00" y2="452.24" stroke="#e3e3e3" stroke-width="0.7"/>
<text x="814.80" y="459.54" font-size="6.6" fill="#555" textLength="5.60" lengthAdjust="spacingAndGlyphs">us</text>
<text x="846.60" y="459.54" font-size="6.6" fill="#444" textLength="49.50" lengthAdjust="spacingAndGlyphs">Billings, MT, USA</text>
<text x="923.50" y="459.54" font-size="6.6" fill="#444" textLength="73.50" lengthAdjust="spacingAndGlyphs">Charter Communications</text>
<text x="1082.00" y="459.54" font-size="6.6" fill="#444" text-anchor="end">1</text>
<line x1="812.00" y1="462.26" x2="1085.00" y2="462.26" stroke="#e3e3e3" stroke-width="0.7"/>
<text x="814.80" y="469.56" font-size="6.6" fill="#555" textLength="5.60" lengthAdjust="spacingAndGlyphs">us</text>
<text x="846.60" y="469.56" font-size="6.6" fill="#444" textLength="50.00" lengthAdjust="spacingAndGlyphs">Dayton, OH, USA</text>
<text x="923.50" y="469.56" font-size="6.6" fill="#444" textLength="40.50" lengthAdjust="spacingAndGlyphs">At&amp;t Wireless</text>
<text x="1082.00" y="469.56" font-size="6.6" fill="#444" text-anchor="end">1</text>
<line x1="812.00" y1="472.28" x2="1085.00" y2="472.28" stroke="#e3e3e3" stroke-width="0.7"/>
<text x="814.80" y="479.58" font-size="6.6" fill="#555" textLength="5.60" lengthAdjust="spacingAndGlyphs">us</text>
<text x="846.60" y="479.58" font-size="6.6" fill="#444" textLength="58.00" lengthAdjust="spacingAndGlyphs">Fort Smith, AR, USA</text>
<text x="923.50" y="479.58" font-size="6.6" fill="#444" textLength="62.50" lengthAdjust="spacingAndGlyphs">Cox Communications</text>
<text x="1082.00" y="479.58" font-size="6.6" fill="#444" text-anchor="end">1</text>
<line x1="812.00" y1="482.30" x2="1085.00" y2="482.30" stroke="#e3e3e3" stroke-width="0.7"/>
<text x="814.80" y="489.60" font-size="6.6" fill="#555" textLength="5.60" lengthAdjust="spacingAndGlyphs">us</text>
<text x="846.60" y="489.60" font-size="6.6" fill="#444" textLength="50.50" lengthAdjust="spacingAndGlyphs">Houston, TX, USA</text>
<text x="923.50" y="489.60" font-size="6.6" fill="#444" textLength="73.00" lengthAdjust="spacingAndGlyphs">Cogent Communications</text>
<text x="1082.00" y="489.60" font-size="6.6" fill="#444" text-anchor="end">1</text>
<line x1="812.00" y1="492.32" x2="1085.00" y2="492.32" stroke="#e3e3e3" stroke-width="0.7"/>
<text x="814.80" y="499.62" font-size="6.6" fill="#555" textLength="5.60" lengthAdjust="spacingAndGlyphs">us</text>
<text x="846.60" y="499.62" font-size="6.6" fill="#444" textLength="60.00" lengthAdjust="spacingAndGlyphs">Jacksonville, FL, USA</text>
<text x="923.50" y="499.62" font-size="6.6" fill="#444" textLength="44.50" lengthAdjust="spacingAndGlyphs">Comcast Cable</text>
<text x="1082.00" y="499.62" font-size="6.6" fill="#444" text-anchor="end">1</text>
<line x1="812.00" y1="502.34" x2="1085.00" y2="502.34" stroke="#e3e3e3" stroke-width="0.7"/>
<text x="814.80" y="509.64" font-size="6.6" fill="#555" textLength="5.60" lengthAdjust="spacingAndGlyphs">us</text>
<text x="846.60" y="509.64" font-size="6.6" fill="#444" textLength="40.00" lengthAdjust="spacingAndGlyphs">Lodi, CA, USA</text>
<text x="923.50" y="509.64" font-size="6.6" fill="#444" textLength="40.50" lengthAdjust="spacingAndGlyphs">At&amp;t Wireless</text>
<text x="1082.00" y="509.64" font-size="6.6" fill="#444" text-anchor="end">1</text>
<line x1="812.00" y1="512.36" x2="1085.00" y2="512.36" stroke="#e3e3e3" stroke-width="0.7"/>
<text x="814.80" y="519.66" font-size="6.6" fill="#555" textLength="5.60" lengthAdjust="spacingAndGlyphs">us</text>
<text x="846.60" y="519.66" font-size="6.6" fill="#444" textLength="65.00" lengthAdjust="spacingAndGlyphs">Los Alamitos, CA, USA</text>
<text x="923.50" y="519.66" font-size="6.6" fill="#444" textLength="93.50" lengthAdjust="spacingAndGlyphs">Orange County Department O...</text>
<text x="1082.00" y="519.66" font-size="6.6" fill="#444" text-anchor="end">1</text>
<line x1="812.00" y1="522.38" x2="1085.00" y2="522.38" stroke="#e3e3e3" stroke-width="0.7"/>
<text x="814.80" y="529.68" font-size="6.6" fill="#555" textLength="5.60" lengthAdjust="spacingAndGlyphs">us</text>
<text x="846.60" y="529.68" font-size="6.6" fill="#444" textLength="62.50" lengthAdjust="spacingAndGlyphs">Los Angeles, CA, USA</text>
<text x="923.50" y="529.68" font-size="6.6" fill="#444" textLength="40.00" lengthAdjust="spacingAndGlyphs">At&amp;t Services</text>
<text x="1082.00" y="529.68" font-size="6.6" fill="#444" text-anchor="end">1</text>
<line x1="812.00" y1="532.40" x2="1085.00" y2="532.40" stroke="#e3e3e3" stroke-width="0.7"/>
<text x="814.80" y="539.70" font-size="6.6" fill="#555" textLength="5.60" lengthAdjust="spacingAndGlyphs">us</text>
<text x="846.60" y="539.70" font-size="6.6" fill="#444" textLength="62.50" lengthAdjust="spacingAndGlyphs">Los Angeles, CA, USA</text>
<text x="923.50" y="539.70" font-size="6.6" fill="#444" textLength="57.00" lengthAdjust="spacingAndGlyphs">Time Warner Cable</text>
<text x="1082.00" y="539.70" font-size="6.6" fill="#444" text-anchor="end">1</text>
<line x1="812.00" y1="542.42" x2="1085.00" y2="542.42" stroke="#e3e3e3" stroke-width="0.7"/>
<text x="814.80" y="549.72" font-size="6.6" fill="#555" textLength="5.60" lengthAdjust="spacingAndGlyphs">us</text>
<text x="846.60" y="549.72" font-size="6.6" fill="#444" textLength="57.50" lengthAdjust="spacingAndGlyphs">Middleton, WI, USA</text>
<text x="923.50" y="549.72" font-size="6.6" fill="#444" textLength="73.50" lengthAdjust="spacingAndGlyphs">Charter Communications</text>
<text x="1082.00" y="549.72" font-size="6.6" fill="#444" text-anchor="end">1</text>
<line x1="812.00" y1="552.44" x2="1085.00" y2="552.44" stroke="#e3e3e3" stroke-width="0.7"/>
<text x="814.80" y="559.74" font-size="6.6" fill="#555" textLength="5.60" lengthAdjust="spacingAndGlyphs">us</text>
<text x="846.60" y="559.74" font-size="6.6" fill="#444" textLength="57.50" lengthAdjust="spacingAndGlyphs">Middleton, WI, USA</text>
<text x="923.50" y="559.74" font-size="6.6" fill="#444" textLength="23.50" lengthAdjust="spacingAndGlyphs">Wiscnet</text>
<text x="1082.00" y="559.74" font-size="6.6" fill="#444" text-anchor="end">1</text>
<line x1="812.00" y1="562.46" x2="1085.00" y2="562.46" stroke="#e3e3e3" stroke-width="0.7"/>
<rect x="1107.00" y="428.70" width="6.20" height="140.00" fill="#c4c4c4"/>
<path d="M1108.2 420.4l2-2 2 2" stroke="#555" stroke-width="0.8" fill="none"/>
<!-- p4_panels -->
<rect x="1134.50" y="113.00" width="270.00" height="500.00" fill="#474645"/>
<rect x="1134.50" y="113.00" width="157.50" height="29.50" fill="#262524"/>
<text x="1141.80" y="130.90" font-size="8.8" fill="#fff" font-weight="bold" textLength="56.50" lengthAdjust="spacingAndGlyphs">Visualizations</text>
<path d="M1279.6 124l3.6 4.2-3.6 4.2" stroke="#e8e8e8" stroke-width="1" fill="none"/>
<rect x="1292.00" y="113.00" width="112.50" height="29.50" fill="#262524"/>
<line x1="1292.00" y1="113.00" x2="1292.00" y2="600.00" stroke="#2e2d2c" stroke-width="1"/>
<text x="1299.60" y="130.90" font-size="8.8" fill="#fff" font-weight="bold" textLength="24.60" lengthAdjust="spacingAndGlyphs">Fields</text>
<path d="M1393.6 124l3.6 4.2-3.6 4.2" stroke="#e8e8e8" stroke-width="1" fill="none"/>
<rect x="1298.80" y="148.00" width="100.60" height="18.00" fill="#232221" stroke="#1a1a1a" stroke-width="1"/>
<circle cx="1312.40" cy="154.80" r="3.00" fill="none" stroke="#ddd" stroke-width="0.9"/><line x1="1310.20" y1="157.00" x2="1306.20" y2="161.00" stroke="#ddd" stroke-width="0.9"/>
<text x="1321.00" y="159.97" font-size="8.4" fill="#d0d0d0" textLength="23.50" lengthAdjust="spacingAndGlyphs">Search</text>
<line x1="1292.50" y1="172.60" x2="1404.50" y2="172.60" stroke="#2e2d2c" stroke-width="1"/>
<rect x="1292.50" y="173.00" width="112.00" height="140.00" fill="#444342"/>
<rect x="1401.80" y="177.00" width="2.40" height="140.00" fill="#5c5b5a"/>
<path d="M1300.6 183.6l2 2-2 2z" fill="#ddd"/>
<rect x="1308.40" y="182.20" width="7.40" height="7.00" fill="#e6e6e6"/><line x1="1310.87" y1="183.80" x2="1310.87" y2="189.20" stroke="#555" stroke-width="0.6"/><line x1="1308.40" y1="185.40" x2="1315.80" y2="185.40" stroke="#555" stroke-width="0.6"/><line x1="1313.33" y1="183.80" x2="1313.33" y2="189.20" stroke="#555" stroke-width="0.6"/><line x1="1308.40" y1="187.20" x2="1315.80" y2="187.20" stroke="#555" stroke-width="0.6"/>
<text x="1323.60" y="188.41" font-size="7.6" fill="#fff" textLength="64.00" lengthAdjust="spacingAndGlyphs">Mailing Campaigns</text>
<path d="M1302.6 198.8v3h-3z" fill="#ddd"/>
<rect x="1308.40" y="197.20" width="7.40" height="7.00" fill="#e6e6e6"/><line x1="1310.87" y1="198.80" x2="1310.87" y2="204.20" stroke="#555" stroke-width="0.6"/><line x1="1308.40" y1="200.40" x2="1315.80" y2="200.40" stroke="#555" stroke-width="0.6"/><line x1="1313.33" y1="198.80" x2="1313.33" y2="204.20" stroke="#555" stroke-width="0.6"/><line x1="1308.40" y1="202.20" x2="1315.80" y2="202.20" stroke="#555" stroke-width="0.6"/>
<text x="1323.60" y="203.41" font-size="7.6" fill="#fff" textLength="68.50" lengthAdjust="spacingAndGlyphs">Table_Query_from_...</text>
<rect x="1295.80" y="211.40" width="105.20" height="12.40" fill="#5b5a59" stroke="#686766" stroke-width="0.6"/>
<rect x="1311.60" y="214.00" width="7.00" height="7.00" fill="#fff"/>
<text x="1332.40" y="219.71" font-size="7.6" fill="#fff" textLength="43.00" lengthAdjust="spacingAndGlyphs">action_count</text>
<text x="1322.40" y="220.20" font-size="7.4" fill="#cfcfcf">Σ</text>
<rect x="1295.80" y="225.20" width="105.20" height="12.40" fill="#5b5a59" stroke="#686766" stroke-width="0.6"/>
<rect x="1311.60" y="227.80" width="7.00" height="7.00" fill="#fff"/>
<text x="1332.40" y="233.51" font-size="7.6" fill="#fff" textLength="36.50" lengthAdjust="spacingAndGlyphs">action_title</text>
<rect x="1295.80" y="239.00" width="105.20" height="12.40" fill="#5b5a59" stroke="#686766" stroke-width="0.6"/>
<rect x="1311.60" y="241.60" width="7.00" height="7.00" fill="#fff"/>
<text x="1332.40" y="247.31" font-size="7.6" fill="#fff" textLength="39.00" lengthAdjust="spacingAndGlyphs">action_type</text>
<rect x="1295.80" y="252.80" width="105.20" height="12.40" fill="#5b5a59" stroke="#686766" stroke-width="0.6"/>
<rect x="1311.60" y="255.40" width="7.00" height="7.00" fill="#fff"/>
<text x="1332.40" y="261.11" font-size="7.6" fill="#fff" textLength="33.00" lengthAdjust="spacingAndGlyphs">action_url</text>
<rect x="1295.80" y="266.60" width="105.20" height="12.40" fill="#5b5a59" stroke="#686766" stroke-width="0.6"/>
<rect x="1311.60" y="269.20" width="7.00" height="7.00" fill="#fff"/>
<text x="1332.40" y="274.91" font-size="7.6" fill="#fff" textLength="14.00" lengthAdjust="spacingAndGlyphs">cost</text>
<rect x="1295.80" y="280.40" width="105.20" height="12.40" fill="#5b5a59" stroke="#686766" stroke-width="0.6"/>
<rect x="1311.60" y="283.00" width="7.00" height="7.00" fill="#fff"/>
<text x="1332.40" y="288.71" font-size="7.6" fill="#fff" textLength="26.00" lengthAdjust="spacingAndGlyphs">country</text>
<rect x="1295.80" y="294.20" width="105.20" height="12.40" fill="#5b5a59" stroke="#686766" stroke-width="0.6"/>
<rect x="1311.60" y="296.80" width="7.00" height="7.00" fill="#fff"/>
<text x="1332.40" y="302.51" font-size="7.6" fill="#fff" textLength="25.50" lengthAdjust="spacingAndGlyphs">custom</text>
<line x1="1140.00" y1="146.80" x2="1140.00" y2="157.80" stroke="#8a8a8a" stroke-width="0.7"/><line x1="1140.00" y1="157.80" x2="1151.50" y2="157.80" stroke="#8a8a8a" stroke-width="0.7"/><rect x="1141.00" y="148.20" width="4.00" height="3.00" fill="#bdbdbd"/><rect x="1145.00" y="148.20" width="3.60" height="3.00" fill="#f0a85a"/><rect x="1141.00" y="152.80" width="5.40" height="3.00" fill="#bdbdbd"/><rect x="1146.40" y="152.80" width="4.00" height="3.00" fill="#f0a85a"/>
<line x1="1157.50" y1="146.80" x2="1157.50" y2="157.80" stroke="#8a8a8a" stroke-width="0.7"/><line x1="1157.50" y1="157.80" x2="1169.00" y2="157.80" stroke="#8a8a8a" stroke-width="0.7"/><rect x="1159.90" y="149.80" width="2.80" height="3.60" fill="#f0a85a"/><rect x="1159.90" y="153.40" width="2.80" height="4.00" fill="#bdbdbd"/><rect x="1164.50" y="147.60" width="2.80" height="5.40" fill="#f0a85a"/><rect x="1164.50" y="153.00" width="2.80" height="4.40" fill="#bdbdbd"/>
<line x1="1175.20" y1="146.80" x2="1175.20" y2="157.80" stroke="#8a8a8a" stroke-width="0.7"/><line x1="1175.20" y1="157.80" x2="1186.70" y2="157.80" stroke="#8a8a8a" stroke-width="0.7"/><rect x="1176.20" y="147.60" width="6.00" height="2.00" fill="#f0a85a"/><rect x="1176.20" y="150.20" width="9.40" height="2.00" fill="#8db4e2"/><rect x="1176.20" y="152.80" width="5.00" height="2.00" fill="#f0a85a"/><rect x="1176.20" y="155.20" width="7.60" height="2.00" fill="#8db4e2"/>
<line x1="1192.80" y1="146.80" x2="1192.80" y2="157.80" stroke="#8a8a8a" stroke-width="0.7"/><line x1="1192.80" y1="157.80" x2="1204.30" y2="157.80" stroke="#8a8a8a" stroke-width="0.7"/><rect x="1194.40" y="151.20" width="2.00" height="6.40" fill="#f0a85a"/><rect x="1196.80" y="147.60" width="2.00" height="10.00" fill="#8db4e2"/><rect x="1199.40" y="149.40" width="2.00" height="8.20" fill="#f0a85a"/><rect x="1201.80" y="151.80" width="2.00" height="5.80" fill="#8db4e2"/>
<line x1="1210.40" y1="146.80" x2="1210.40" y2="157.80" stroke="#8a8a8a" stroke-width="0.7"/><line x1="1210.40" y1="157.80" x2="1221.90" y2="157.80" stroke="#8a8a8a" stroke-width="0.7"/><rect x="1211.40" y="148.20" width="3.00" height="3.00" fill="#bdbdbd"/><rect x="1214.40" y="148.20" width="7.00" height="3.00" fill="#8db4e2"/><rect x="1211.40" y="152.80" width="4.60" height="3.00" fill="#bdbdbd"/><rect x="1216.00" y="152.80" width="5.40" height="3.00" fill="#8db4e2"/>
<line x1="1228.20" y1="146.80" x2="1228.20" y2="157.80" stroke="#8a8a8a" stroke-width="0.7"/><line x1="1228.20" y1="157.80" x2="1239.70" y2="157.80" stroke="#8a8a8a" stroke-width="0.7"/><rect x="1230.40" y="147.60" width="3.00" height="6.00" fill="#8db4e2"/><rect x="1230.40" y="153.60" width="3.00" height="3.80" fill="#bdbdbd"/><rect x="1235.20" y="147.60" width="3.00" height="6.60" fill="#8db4e2"/><rect x="1235.20" y="154.20" width="3.00" height="3.20" fill="#bdbdbd"/>
<line x1="1245.60" y1="146.80" x2="1245.60" y2="157.80" stroke="#8a8a8a" stroke-width="0.7"/><line x1="1245.60" y1="157.80" x2="1257.10" y2="157.80" stroke="#8a8a8a" stroke-width="0.7"/><path d="M1246.6 155.8l3-4 2.4 1.6 4.6-5" stroke="#f0a85a" stroke-width="0.9" fill="none"/><path d="M1246.6 153.4l3-2.6 2.8.6 4.2-2.6" stroke="#3f7fcf" stroke-width="0.9" fill="none"/>
<path d="M1263.2 157.8v-5.4l3-2.4 3 3 5-5v9.8z" fill="#bdbdbd"/><path d="M1263.2 152.4l3-2.4 3 3 5-5v5.6l-5 -1-3 1-3-0.6z" fill="#f09a3a"/>
<path d="M1140 173.0v-8l2-2 2.4 2.6 2.4-3 2.4 2.6 2.3-2.4v10.2z" fill="#f0a85a"/><path d="M1140 169.4l2-2 2.4 2.2 2.4-2.8 2.4 2.4 2.3-2v4.4l-2.3 1.6-2.4-2-2.4 2-2.4-1.8-2 1.6z" fill="#3f7fcf"/>
<line x1="1157.50" y1="161.40" x2="1157.50" y2="172.40" stroke="#8a8a8a" stroke-width="0.7"/><line x1="1157.50" y1="172.40" x2="1169.00" y2="172.40" stroke="#8a8a8a" stroke-width="0.7"/><rect x="1159.50" y="166.40" width="2.00" height="5.60" fill="#f0a85a"/><rect x="1162.30" y="164.40" width="2.00" height="7.60" fill="#f0a85a"/><rect x="1165.10" y="167.40" width="2.00" height="4.60" fill="#f0a85a"/><rect x="1159.50" y="169.40" width="2.00" height="2.60" fill="#bdbdbd"/><rect x="1162.30" y="168.40" width="2.00" height="3.60" fill="#bdbdbd"/><path d="M1158.5 168.4l3-2 3 1.6 4-5" stroke="#d9534f" stroke-width="0.7" fill="none"/><line x1="1168.80" y1="161.40" x2="1168.80" y2="172.40" stroke="#f0a85a" stroke-width="0.8"/>
<line x1="1175.20" y1="161.40" x2="1175.20" y2="172.40" stroke="#8a8a8a" stroke-width="0.7"/><line x1="1175.20" y1="172.40" x2="1186.70" y2="172.40" stroke="#8a8a8a" stroke-width="0.7"/><rect x="1176.80" y="166.00" width="1.80" height="6.00" fill="#f0a85a"/><rect x="1178.80" y="163.40" width="1.80" height="8.60" fill="#8db4e2"/><rect x="1181.60" y="166.80" width="1.80" height="5.20" fill="#f0a85a"/><rect x="1183.60" y="164.40" width="1.80" height="7.60" fill="#8db4e2"/><path d="M1176.2 169.4l3-3 3 1.6 4-4" stroke="#d9534f" stroke-width="0.7" fill="none"/><line x1="1186.50" y1="161.40" x2="1186.50" y2="172.40" stroke="#f0a85a" stroke-width="0.8"/>
<line x1="1192.80" y1="161.40" x2="1192.80" y2="172.40" stroke="#8a8a8a" stroke-width="0.7"/><line x1="1192.80" y1="172.40" x2="1204.30" y2="172.40" stroke="#8a8a8a" stroke-width="0.7"/><rect x="1194.40" y="162.40" width="1.80" height="9.60" fill="#f1f1f1"/><rect x="1197.20" y="162.40" width="1.80" height="4.60" fill="#d9534f"/><rect x="1199.60" y="165.00" width="1.80" height="5.00" fill="#3d9c6e"/><rect x="1202.00" y="162.40" width="1.80" height="9.60" fill="#f1f1f1"/>
<line x1="1210.40" y1="161.40" x2="1210.40" y2="172.40" stroke="#8a8a8a" stroke-width="0.7"/><line x1="1210.40" y1="172.40" x2="1221.90" y2="172.40" stroke="#8a8a8a" stroke-width="0.7"/><circle cx="1213.40" cy="168.80" r="0.90" fill="#3f7fcf"/><circle cx="1215.80" cy="164.80" r="0.90" fill="#f0a85a"/><circle cx="1217.40" cy="167.80" r="0.90" fill="#f0a85a"/><circle cx="1219.40" cy="164.00" r="0.90" fill="#4fb0a0"/><circle cx="1220.00" cy="169.40" r="0.90" fill="#bdbdbd"/><circle cx="1214.00" cy="165.80" r="0.80" fill="#3f7fcf"/><circle cx="1220.80" cy="166.40" r="0.80" fill="#3f7fcf"/>
<circle cx="1234.00" cy="167.00" r="5.60" fill="#8db4e2"/><path d="M1234.0 167.0V161.4a5.6 5.6 0 0 0 -5.4 4z" fill="#f3d1a6"/><path d="M1234.0 167.0L1228.6000000000001 165.4a5.6 5.6 0 0 0 2 6z" fill="#f0a85a"/><path d="M1234.0 167.0L1228.6000000000001 165.4M1234.0 167.0V161.4M1234.0 167.0L1230.6000000000001 171.4" stroke="#444" stroke-width="0.6"/>
<rect x="1245.60" y="161.40" width="11.60" height="11.20" fill="#f1f1f1"/><rect x="1246.60" y="162.40" width="5.60" height="3.80" fill="#8db4e2"/><rect x="1253.00" y="162.40" width="3.40" height="3.80" fill="#8db4e2"/><line x1="1245.60" y1="167.00" x2="1257.20" y2="167.00" stroke="#555" stroke-width="0.6"/><line x1="1252.20" y1="167.00" x2="1252.20" y2="172.60" stroke="#555" stroke-width="0.6"/><line x1="1248.60" y1="161.40" x2="1248.60" y2="166.80" stroke="#777" stroke-width="0.4"/>
<circle cx="1269.00" cy="167.00" r="5.40" fill="#f1f1f1" stroke="#8db4e2" stroke-width="0.9"/><ellipse cx="1269.0" cy="167.0" rx="2.4" ry="5.4" fill="none" stroke="#8db4e2" stroke-width="0.7"/><line x1="1263.80" y1="167.00" x2="1274.20" y2="167.00" stroke="#8db4e2" stroke-width="0.7"/><line x1="1264.60" y1="164.20" x2="1273.40" y2="164.20" stroke="#8db4e2" stroke-width="0.6"/><line x1="1264.60" y1="169.80" x2="1273.40" y2="169.80" stroke="#8db4e2" stroke-width="0.6"/>
<rect x="1140.00" y="176.40" width="11.60" height="11.60" fill="#f1f1f1"/><rect x="1140.00" y="176.40" width="11.60" height="1.80" fill="#8db4e2"/><line x1="1143.87" y1="178.20" x2="1143.87" y2="188.00" stroke="#b5c3d6" stroke-width="0.7"/><line x1="1147.73" y1="178.20" x2="1147.73" y2="188.00" stroke="#b5c3d6" stroke-width="0.7"/><line x1="1140.00" y1="181.47" x2="1151.60" y2="181.47" stroke="#b5c3d6" stroke-width="0.7"/><line x1="1140.00" y1="184.73" x2="1151.60" y2="184.73" stroke="#b5c3d6" stroke-width="0.7"/>
<rect x="1157.50" y="176.40" width="11.60" height="11.60" fill="#f1f1f1"/><rect x="1157.50" y="176.40" width="11.60" height="1.80" fill="#8db4e2"/><line x1="1161.37" y1="178.20" x2="1161.37" y2="188.00" stroke="#b5c3d6" stroke-width="0.7"/><line x1="1165.23" y1="178.20" x2="1165.23" y2="188.00" stroke="#b5c3d6" stroke-width="0.7"/><line x1="1157.50" y1="181.47" x2="1169.10" y2="181.47" stroke="#b5c3d6" stroke-width="0.7"/><line x1="1157.50" y1="184.73" x2="1169.10" y2="184.73" stroke="#b5c3d6" stroke-width="0.7"/><rect x="1157.50" y="178.20" width="3.80" height="9.80" fill="#dce6f3"/>
<path d="M1175.2 177.4l6 1 5.6-1.6v6l-2 1v2.8l-3 1.6-3.6-2.2-2.6-.6z" fill="#f1f1f1"/><path d="M1176.2 180.4h6v3h-5z" fill="#3f7fcf"/><path d="M1183.2 178.4h3v4h-3z" fill="#f0a85a"/><path d="M1179.2 184.4h4v2h-3z" fill="#8db4e2"/>
<rect x="1192.80" y="177.20" width="11.60" height="2.00" fill="#8db4e2"/><rect x="1194.40" y="180.20" width="8.40" height="2.00" fill="#f0a85a"/><rect x="1195.80" y="183.20" width="5.60" height="2.00" fill="#f0a85a"/><rect x="1197.00" y="186.20" width="3.20" height="1.60" fill="#8db4e2"/>
<path d="M1211.4 186.4a4.9 4.9 0 0 1 9.8 0" fill="none" stroke="#f0a85a" stroke-width="2"/><path d="M1219.0 182.20000000000002a4.9 4.9 0 0 1 2.2 4.2" fill="none" stroke="#4fa58a" stroke-width="2"/>
<rect x="1228.20" y="176.40" width="11.60" height="11.60" fill="#f1f1f1"/><line x1="1230.60" y1="177.40" x2="1230.60" y2="187.00" stroke="#888" stroke-width="0.7"/><rect x="1231.80" y="178.40" width="4.60" height="1.60" fill="#8db4e2"/><rect x="1231.80" y="182.00" width="3.40" height="1.60" fill="#8db4e2"/>
<rect x="1245.60" y="177.40" width="11.60" height="8.60" fill="#f1f1f1"/><text x="1246.80" y="183.80" font-size="5.4" fill="#3f7fcf" textLength="9.20" lengthAdjust="spacingAndGlyphs">123</text>
<rect x="1263.20" y="177.80" width="11.60" height="8.60" fill="#f1f1f1"/><path d="M1266.2 182.8l1.8-2.8 1.8 2.8z" fill="#3d9c6e"/><path d="M1270.2 180.20000000000002h3.4l-1.7 2.6z" fill="#d9534f"/><line x1="1264.80" y1="184.60" x2="1273.20" y2="184.60" stroke="#bbb" stroke-width="0.6"/>
<rect x="1140.00" y="191.60" width="10.60" height="11.20" fill="#f1f1f1"/><rect x="1140.00" y="191.60" width="10.60" height="1.80" fill="#8db4e2"/><rect x="1141.40" y="195.00" width="1.40" height="1.40" fill="#f0a85a"/><rect x="1141.40" y="197.60" width="1.40" height="1.40" fill="#f0a85a"/><rect x="1141.40" y="200.20" width="1.40" height="1.40" fill="#3f7fcf"/><path d="M1145.6 198.2h6.6l-2.6 3v3l-1.4-1v-2z" fill="#9a9a9a"/>
<circle cx="1163.30" cy="197.40" r="4.30" fill="none" stroke="#3f7fcf" stroke-width="2.6" stroke-dasharray="5.2 1.2"/><path d="M1165.1 193.5a4.3 4.3 0 0 1 2.4 3" fill="none" stroke="#f0a85a" stroke-width="2.6"/>
<text x="1175.80" y="203.20" font-size="14.5" fill="#8db4e2">R</text>
<circle cx="1194.80" cy="196.60" r="0.70" fill="#ddd"/><circle cx="1197.80" cy="196.60" r="0.70" fill="#ddd"/><circle cx="1200.80" cy="196.60" r="0.70" fill="#ddd"/>
<rect x="1134.50" y="221.20" width="157.50" height="22.20" fill="#262524"/>
<rect x="1142.00" y="241.60" width="22.50" height="1.80" fill="#f2c811"/>
<rect x="1146.60" y="227.40" width="12.60" height="10.60" fill="none" stroke="#e8e8e8" stroke-width="0.8" stroke-dasharray="1 0.6"/><line x1="1146.60" y1="230.20" x2="1159.20" y2="230.20" stroke="#e8e8e8" stroke-width="0.8"/><line x1="1146.60" y1="233.20" x2="1159.20" y2="233.20" stroke="#e8e8e8" stroke-width="0.7"/><line x1="1146.60" y1="235.80" x2="1159.20" y2="235.80" stroke="#e8e8e8" stroke-width="0.7"/>
<rect x="1172.8" y="226.2" width="10.4" height="3.6" rx="1.6" fill="none" stroke="#e8e8e8" stroke-width="1"/><path d="M1183.2 228h1.6v4h-6.4v1.6" fill="none" stroke="#e8e8e8" stroke-width="0.9"/><rect x="1177" y="233.4" width="2.6" height="5.2" rx="0.8" fill="none" stroke="#e8e8e8" stroke-width="0.9"/>
<text x="1142.00" y="255.77" font-size="7.8" fill="#bdbdbd" textLength="21.50" lengthAdjust="spacingAndGlyphs">Values</text>
<rect x="1137.00" y="261.30" width="151.60" height="17.40" fill="#4e4d4c" stroke="#666564" stroke-width="0.7" stroke-dasharray="1.4 1.2"/>
<text x="1143.80" y="272.97" font-size="7.8" fill="#bdbdbd" textLength="69.50" lengthAdjust="spacingAndGlyphs">Drag data fields here</text>
<rect x="1134.50" y="282.00" width="157.50" height="21.20" fill="#262524"/>
<text x="1143.00" y="298.04" font-size="9.2" fill="#fff" font-weight="bold" textLength="27.00" lengthAdjust="spacingAndGlyphs">Filters</text>
<text x="1142.00" y="318.37" font-size="7.8" fill="#bdbdbd" textLength="54.50" lengthAdjust="spacingAndGlyphs">Page level filters</text>
<rect x="1137.00" y="326.30" width="151.60" height="15.00" fill="#4e4d4c" stroke="#666564" stroke-width="0.7" stroke-dasharray="1.4 1.2"/>
<text x="1142.60" y="337.37" font-size="7.8" fill="#bdbdbd" textLength="69.50" lengthAdjust="spacingAndGlyphs">Drag data fields here</text>
<text x="1142.00" y="355.97" font-size="7.8" fill="#bdbdbd" textLength="60.00" lengthAdjust="spacingAndGlyphs">Report level filters</text>
<rect x="1138.80" y="364.60" width="150.00" height="240.00" fill="#313030" stroke="#5a5958" stroke-width="0.7" stroke-dasharray="1.4 1.2"/>
<text x="1144.60" y="376.41" font-size="7.9" fill="#fff" textLength="33.50" lengthAdjust="spacingAndGlyphs">time_filter</text>
<path d="M1257.4 375.6l4-3.8 4 3.8" stroke="#fff" stroke-width="1.3" fill="none"/>
<path d="M1272.4 371l5.4 5.4M1277.8 371l-5.4 5.4" stroke="#ddd" stroke-width="0.9" fill="none"/>
<text x="1144.60" y="388.81" font-size="7.9" fill="#fff" textLength="120.50" lengthAdjust="spacingAndGlyphs">is on or after Fri Jan 01 2016 00:00:...</text>
<path d="M1272.6 387.4l4.4-4.4 3.2 3.2-3 3h-3z" fill="none" stroke="#ddd" stroke-width="0.8"/>
<text x="1144.60" y="399.21" font-size="7.9" fill="#fff" textLength="34.50" lengthAdjust="spacingAndGlyphs">Filter Type</text>
<rect x="1144.80" y="404.00" width="135.60" height="14.40" fill="#3a3939" stroke="#1f1e1e" stroke-width="1.2"/><path d="M1271.4 409.60h4.4l-2.2 3.4z" fill="#111"/><text x="1149.40" y="414.21" font-size="7.9" fill="#fff" textLength="60.50" lengthAdjust="spacingAndGlyphs">Advanced filtering</text>
<text x="1144.60" y="435.81" font-size="7.9" fill="#fff" textLength="92.50" lengthAdjust="spacingAndGlyphs">Show items when the value:</text>
<rect x="1144.80" y="443.00" width="135.60" height="13.80" fill="#3a3939" stroke="#1f1e1e" stroke-width="1.2"/><path d="M1271.4 448.30h4.4l-2.2 3.4z" fill="#111"/><text x="1149.40" y="452.91" font-size="7.9" fill="#fff" textLength="42.00" lengthAdjust="spacingAndGlyphs">is on or after</text>
<rect x="1144.80" y="459.80" width="120.00" height="13.80" fill="#282727" stroke="#1f1e1e" stroke-width="1"/>
<text x="1149.00" y="469.54" font-size="7.7" fill="#fff" textLength="109.50" lengthAdjust="spacingAndGlyphs">Fri Jan 01 2016 00:00:00 GMT-0...</text>
<rect x="1268.60" y="463.20" width="7.20" height="6.80" fill="#e8e8e8"/><line x1="1271.00" y1="463.20" x2="1271.00" y2="470.00" stroke="#444" stroke-width="0.6"/><line x1="1273.40" y1="463.20" x2="1273.40" y2="470.00" stroke="#444" stroke-width="0.6"/><line x1="1268.60" y1="465.40" x2="1275.80" y2="465.40" stroke="#444" stroke-width="0.5"/><line x1="1268.60" y1="467.80" x2="1275.80" y2="467.80" stroke="#444" stroke-width="0.5"/>
<path d="M1158.8000000000002 481l2.6-2.4 2.6 2.4" stroke="#999" stroke-width="0.8" fill="none"/>
<path d="M1158.8000000000002 504.4l2.6 2.4 2.6-2.4" stroke="#999" stroke-width="0.8" fill="none"/>
<path d="M1192.7 481l2.6-2.4 2.6 2.4" stroke="#999" stroke-width="0.8" fill="none"/>
<path d="M1192.7 504.4l2.6 2.4 2.6-2.4" stroke="#999" stroke-width="0.8" fill="none"/>
<rect x="1144.80" y="485.00" width="30.60" height="14.40" fill="#282727" stroke="#1f1e1e" stroke-width="1"/>
<rect x="1178.60" y="485.00" width="31.00" height="14.40" fill="#282727" stroke="#1f1e1e" stroke-width="1"/>
<text x="1160.00" y="495.21" font-size="7.9" fill="#fff" text-anchor="middle">12</text>
<text x="1194.00" y="495.21" font-size="7.9" fill="#fff" text-anchor="middle">00</text>
<text x="1176.00" y="495.21" font-size="7.9" fill="#fff">:</text>
<text x="1210.80" y="495.44" font-size="8" fill="#f2c811" font-weight="bold" textLength="12.40" lengthAdjust="spacingAndGlyphs">AM</text>
<circle cx="1148.70" cy="520.60" r="3.30" fill="#222" stroke="#eee" stroke-width="0.9"/><circle cx="1148.70" cy="520.60" r="1.50" fill="#fff"/>
<text x="1155.00" y="524.41" font-size="7.9" fill="#fff" textLength="13.50" lengthAdjust="spacingAndGlyphs">And</text>
<circle cx="1186.80" cy="520.40" r="3.30" fill="#2a2929" stroke="#eee" stroke-width="0.9"/>
<text x="1192.90" y="524.41" font-size="7.9" fill="#fff" textLength="8.00" lengthAdjust="spacingAndGlyphs">Or</text>
<rect x="1144.80" y="529.80" width="135.60" height="14.20" fill="#3a3939" stroke="#1f1e1e" stroke-width="1.2"/><path d="M1271.4 535.30h4.4l-2.2 3.4z" fill="#111"/>
<text x="1280.20" y="554.24" font-size="8" fill="#9a9a9a" text-anchor="end" textLength="37.00" lengthAdjust="spacingAndGlyphs">Apply filter</text>
<!-- p5_phone -->
<rect x="1284.5" y="305" width="266.4" height="400" rx="12" fill="#222120" stroke="#3a3938" stroke-width="0.8"/>
<circle cx="1386.00" cy="329.60" r="3.50" fill="#0c0c0c"/>
<rect x="1403.2" y="326" width="49.8" height="7.3" rx="3.65" fill="#0c0c0c"/>
<rect x="1300.50" y="354.20" width="235.00" height="260.00" fill="#f3f4f6"/>
<rect x="1300.50" y="354.20" width="156.20" height="5.80" fill="#2a8bdb"/>
<rect x="1300.50" y="360.00" width="156.20" height="22.00" fill="#fff"/>
<text x="1307.00" y="372.98" font-size="7.2" fill="#444" textLength="50.00" lengthAdjust="spacingAndGlyphs">Closed Business</text>
<rect x="1305.20" y="382.00" width="146.60" height="108.40" fill="#fff"/>
<rect x="1305.20" y="382.00" width="146.60" height="11.40" fill="#dcdcdc"/>
<text x="1378.40" y="389.85" font-size="6.2" fill="#666" text-anchor="middle" font-weight="bold" textLength="61.50" lengthAdjust="spacingAndGlyphs">Closed Business QTD</text>
<path d="M1326.50 450.40A52 52 0 0 1 1341.41 413.95L1353.18 425.52A35.5 35.5 0 0 0 1343.00 450.40z" fill="#c9605a"/>
<path d="M1341.41 413.95A52 52 0 0 1 1415.59 413.95L1403.82 425.52A35.5 35.5 0 0 0 1353.18 425.52z" fill="#c9bf5b"/>
<path d="M1415.59 413.95A52 52 0 0 1 1430.50 450.40L1414.00 450.40A35.5 35.5 0 0 0 1403.82 425.52z" fill="#55c258"/>
<path d="M1329.50 450.40A49 49 0 0 1 1343.55 416.06L1345.69 418.16A46 46 0 0 0 1332.50 450.40z" fill="#d27770"/>
<path d="M1343.55 416.06A49 49 0 0 1 1413.45 416.06L1411.31 418.16A46 46 0 0 0 1345.69 418.16z" fill="#d1c86e"/>
<path d="M1413.45 416.06A49 49 0 0 1 1427.50 450.40L1424.50 450.40A46 46 0 0 0 1411.31 418.16z" fill="#6ccd6e"/>
<path d="M1376.8 450.4L1381.7 413.4L1380.4 450.4z" fill="#111"/>
<circle cx="1378.50" cy="450.40" r="3.10" fill="#1b2a36"/>
<line x1="1343.00" y1="450.60" x2="1346.00" y2="450.60" stroke="#444" stroke-width="0.7"/><line x1="1411.00" y1="450.60" x2="1414.00" y2="450.60" stroke="#444" stroke-width="0.7"/>
<text x="1326.00" y="457.32" font-size="4.6" fill="#222" text-anchor="middle" textLength="10.60" lengthAdjust="spacingAndGlyphs">$0.00</text>
<text x="1432.40" y="457.32" font-size="4.6" fill="#222" text-anchor="middle" textLength="10.60" lengthAdjust="spacingAndGlyphs">$2.00</text>
<text x="1358.20" y="433.12" font-size="4.6" fill="#222" text-anchor="middle" textLength="10.60" lengthAdjust="spacingAndGlyphs">$0.50</text>
<text x="1397.80" y="433.12" font-size="4.6" fill="#222" text-anchor="middle" textLength="10.60" lengthAdjust="spacingAndGlyphs">$1.50</text>
<text x="1378.60" y="464.64" font-size="6.8" fill="#333" text-anchor="middle" textLength="34.00" lengthAdjust="spacingAndGlyphs">$1.06 : 53%</text>
<text x="1378.60" y="480.29" font-size="3.9" fill="#111" text-anchor="middle" font-weight="bold" textLength="53.00" lengthAdjust="spacingAndGlyphs">Sum of Amount (Millions)</text>
<clipPath id="phclip"><rect x="1300.5" y="354" width="156.2" height="210"/></clipPath>
<g clip-path="url(#phclip)"><text x="1300.00" y="499.51" font-size="7" fill="#8a8a8a" textLength="113.50" lengthAdjust="spacingAndGlyphs">Where's our business at this moment?</text><text x="1305.00" y="512.98" font-size="7.2" fill="#444" textLength="65.50" lengthAdjust="spacingAndGlyphs">Closed Business QTD</text><text x="1307.00" y="532.04" font-size="6.8" fill="#a9a9a9" textLength="46.50" lengthAdjust="spacingAndGlyphs">Opportunity Na.</text><text x="1377.50" y="532.04" font-size="6.8" fill="#a9a9a9" textLength="23.50" lengthAdjust="spacingAndGlyphs">Amount</text><text x="1438.50" y="532.04" font-size="6.8" fill="#a9a9a9">Account</text><rect x="1300.50" y="540.40" width="66.50" height="30.00" fill="#fff"/><rect x="1370.00" y="540.40" width="60.00" height="30.00" fill="#fff"/><rect x="1432.00" y="540.40" width="30.00" height="30.00" fill="#fff"/><text x="1307.00" y="553.24" font-size="6.8" fill="#2c5c9c" textLength="52.50" lengthAdjust="spacingAndGlyphs">Vand Enterprise...</text><text x="1376.60" y="553.24" font-size="6.8" fill="#555" textLength="32.00" lengthAdjust="spacingAndGlyphs">$11,000.00</text><text x="1438.50" y="553.24" font-size="6.8" fill="#2c5c9c">Vand In</text></g>
<rect x="1456.70" y="354.20" width="2.40" height="260.00" fill="#e9edf1"/>
<rect x="1459.00" y="354.20" width="76.50" height="260.00" fill="#344a63"/>
<rect x="1459.00" y="354.20" width="76.50" height="6.00" fill="#2e4259"/>
<text x="1466.20" y="375.58" font-size="6.6" fill="#e4e9ef" textLength="22.50" lengthAdjust="spacingAndGlyphs">Internal</text>
<text x="1466.20" y="401.78" font-size="6.6" fill="#e4e9ef" textLength="65.50" lengthAdjust="spacingAndGlyphs">Customer Community</text>
<text x="1466.20" y="427.98" font-size="6.6" fill="#e4e9ef" textLength="57.50" lengthAdjust="spacingAndGlyphs">Partner Community</text>
<line x1="1459.00" y1="386.50" x2="1535.50" y2="386.50" stroke="#30455c" stroke-width="0.8"/>
<line x1="1459.00" y1="412.80" x2="1535.50" y2="412.80" stroke="#30455c" stroke-width="0.8"/>
<rect x="1459.00" y="436.40" width="76.50" height="6.60" fill="#2f435a"/>
<rect x="1465.50" y="449.30" width="14.60" height="14.40" fill="#2b3f56" rx="1.2"/>
<path d="M1470.4 456.6h4.8M1472.8 454.2v4.8" stroke="#fff" stroke-width="1.2"/>
<text x="1485.50" y="459.21" font-size="7" fill="#e4e9ef" textLength="28.50" lengthAdjust="spacingAndGlyphs">Add new</text>
<line x1="1599.00" y1="476.50" x2="1599.00" y2="486.00" stroke="#dedede" stroke-width="0.9"/>
<!-- p6_tablet -->
<rect x="28.3" y="270.5" width="462.4" height="400" rx="12.5" fill="#222120"/>
<circle cx="259.50" cy="299.20" r="6.00" fill="#fff" stroke="#0a0a0a" stroke-width="0.8"/>
<circle cx="259.20" cy="300.60" r="1.40" fill="#cfd6dd"/>
<rect x="49.20" y="326.20" width="420.40" height="300.00" fill="#fff"/>
<rect x="123.80" y="326.20" width="30.00" height="0.80" fill="#9db9e6"/>
<defs><linearGradient id="mapbg" x1="0" y1="0" x2="0" y2="1"><stop offset="0" stop-color="#efefef"/><stop offset="1" stop-color="#f7f7f7"/></linearGradient><linearGradient id="land" x1="0" y1="0" x2="0" y2="1"><stop offset="0" stop-color="#dedede"/><stop offset="1" stop-color="#c9c9c9"/></linearGradient></defs>
<filter id="blur2" x="-5%" y="-5%" width="110%" height="110%"><feGaussianBlur stdDeviation="2.2"/></filter>
<rect x="57.50" y="338.00" width="245.00" height="101.00" fill="url(#mapbg)" filter="url(#blur2)"/>
<path d="M63.3 351.3L67.5 348.5L75.8 347.8L82.8 348.5L91.1 348.5L100.1 349.2L107.0 349.2L114.0 347.1L120.9 348.5L123.0 350.6L118.8 352.7L114.7 355.5L116.1 357.6L120.9 359.0L124.4 361.1L125.1 359.0L126.5 356.9L125.8 354.1L129.3 354.1L132.7 356.2L135.5 355.5L138.3 359.0L141.1 361.1L138.3 362.5L134.1 362.5L134.8 364.6L137.6 365.3L134.1 366.7L131.3 367.4L130.6 368.8L128.6 369.5L127.2 371.6L127.2 373.0L124.4 375.1L123.7 377.2L124.4 380.0L123.0 378.6L122.3 376.5L120.2 376.5L117.5 377.2L114.7 377.2L112.6 378.6L111.9 381.4L113.3 384.2L116.1 384.9L117.5 382.8L119.5 382.8L118.8 386.3L121.6 387.0L122.3 389.8L124.4 391.2L126.5 391.9L124.4 392.6L122.3 391.9L120.2 389.8L118.8 388.4L116.1 387.7L114.0 386.3L110.5 385.6L107.0 383.5L106.4 381.4L103.6 378.6L101.5 375.8L100.1 376.5L102.2 379.3L103.6 381.4L101.5 378.6L99.4 375.8L98.0 373.7L95.9 373.0L93.9 369.5L93.9 364.6L91.1 361.8L88.3 359.0L85.5 356.9L81.4 355.5L77.2 355.5L74.4 356.9L70.3 358.3L66.1 359.7L68.9 356.9L65.4 354.8L64.7 352.7zM129.3 342.9L138.3 340.1L155.6 339.4L166.0 340.8L167.4 344.3L164.7 348.5L159.1 349.9L152.2 352.0L150.1 355.5L146.6 354.8L143.1 351.3L141.8 348.5L138.3 344.3zM118.8 346.4L124.4 346.4L131.3 347.1L136.9 350.6L134.8 353.4L130.0 352.7L125.8 349.9L118.8 348.5zM98.0 347.1L107.0 346.4L109.1 349.2L100.1 349.9zM116.1 341.5L131.3 339.4L136.9 340.1L127.9 343.6L117.5 344.3zM93.2 345.7L100.1 344.3L107.0 344.3L103.6 346.4L95.3 347.1zM126.5 391.9L130.0 389.1L133.4 390.5L136.9 390.5L140.4 393.3L143.8 394.7L145.2 397.5L149.4 398.9L153.5 400.3L155.6 402.4L154.2 405.9L152.9 409.4L151.5 412.9L148.7 414.3L146.6 416.4L143.8 419.9L141.8 422.0L139.7 424.1L136.2 425.5L134.8 429.0L132.7 432.5L132.0 434.6L130.0 434.6L127.9 432.5L128.6 428.3L129.3 424.1L130.6 418.5L131.3 411.5L128.6 408.0L125.8 403.1L123.7 401.0L124.4 398.9L125.1 396.1L126.5 394.0zM168.1 387.0L168.1 382.8L170.9 378.6L173.0 376.5L175.8 373.0L179.9 372.3L186.9 371.6L187.6 373.7L190.3 375.1L193.8 375.1L197.3 375.1L202.1 375.8L203.5 377.9L204.2 380.7L205.6 383.5L207.0 387.0L209.8 389.1L215.3 389.1L213.2 394.0L209.1 398.2L207.7 401.0L207.0 404.5L207.7 408.0L204.9 410.8L204.2 414.3L202.1 417.1L199.4 420.6L195.2 421.3L192.4 421.3L191.7 418.5L189.6 412.9L188.2 409.4L188.9 404.5L188.2 401.0L186.2 398.2L186.2 394.7L183.4 394.0L179.9 394.0L176.4 394.0L173.7 394.0L170.9 391.2L168.8 389.1zM210.5 408.7L213.9 405.9L214.6 408.7L212.5 415.0L210.5 414.3zM173.7 371.6L173.7 367.4L178.5 367.4L179.2 365.3L177.1 363.9L180.6 362.5L182.7 361.1L185.5 359.7L185.5 357.6L186.9 357.6L188.2 359.7L192.4 359.7L194.5 359.0L195.2 356.9L199.4 356.2L200.7 355.5L195.9 355.5L194.5 353.4L197.3 352.0L195.2 351.3L192.4 353.4L191.7 355.5L191.0 358.3L188.9 358.3L187.6 356.2L184.1 356.9L183.4 354.8L186.9 352.7L190.3 349.9L193.8 348.5L199.4 347.8L202.1 348.5L207.7 350.6L208.4 352.7L204.2 352.7L205.6 351.3L210.5 351.3L211.1 349.9L218.1 349.9L221.6 349.2L227.1 349.9L228.5 347.1L232.0 347.1L235.4 346.4L242.4 345.0L249.3 344.3L252.8 342.9L257.6 344.3L258.3 345.7L266.7 346.4L270.1 347.8L277.1 347.1L284.0 347.8L291.0 348.5L297.9 348.5L304.8 349.2L304.8 352.0L303.5 354.1L297.9 355.5L293.0 356.9L292.3 359.0L288.9 361.8L288.2 357.6L287.5 356.2L280.5 356.2L277.1 359.0L273.6 359.7L275.7 361.1L277.1 363.9L273.6 366.7L270.1 368.1L268.8 370.2L268.1 373.0L267.4 371.6L266.7 370.2L263.9 369.5L261.8 370.2L264.6 371.6L262.5 373.7L263.9 375.8L263.2 378.6L260.4 381.4L256.3 382.8L254.9 382.8L253.5 384.9L255.6 388.4L253.5 391.2L251.4 390.5L249.3 388.4L248.6 391.2L251.4 396.1L250.0 395.4L247.9 391.9L247.9 387.7L245.8 386.3L245.2 384.2L243.1 382.1L241.0 382.1L238.9 384.2L235.4 387.0L235.4 389.8L233.4 391.9L232.0 389.1L230.6 385.6L229.9 382.8L227.1 381.4L225.7 380.0L220.2 380.0L218.8 378.6L216.0 378.6L214.6 376.5L213.2 376.5L215.3 379.3L218.1 380.7L220.2 381.4L220.9 383.5L218.1 385.6L214.6 387.0L211.1 388.4L209.8 388.4L209.1 385.6L207.0 382.8L204.2 377.9L204.2 375.8L204.9 372.3L202.1 372.3L199.4 371.6L198.7 369.5L200.7 368.8L204.9 368.8L207.7 368.8L208.4 367.4L205.6 366.0L202.8 365.3L200.7 365.3L199.4 367.4L198.0 369.5L195.9 369.5L195.9 371.6L194.5 370.2L193.1 368.1L189.6 366.0L188.9 366.7L192.4 369.5L191.0 370.9L190.3 369.5L188.2 368.1L186.2 366.7L182.7 367.4L182.0 368.1L179.9 369.5L179.2 371.6L176.4 372.3zM176.4 362.5L180.6 361.8L179.9 360.4L178.5 358.3L177.8 356.9L175.8 357.6L176.4 359.7L177.8 360.4L176.4 361.1zM173.0 361.1L175.8 361.1L175.8 359.0L173.0 359.7zM163.3 352.0L170.2 351.3L170.2 352.7L164.7 353.4zM270.1 375.8L271.5 373.7L274.3 373.0L277.1 372.3L277.8 369.5L278.5 367.4L280.5 366.7L277.8 366.0L277.1 368.1L276.4 370.9L274.3 371.6L271.5 373.0L270.1 374.4zM245.8 394.0L252.1 398.9L253.5 401.7L250.7 400.3L247.9 396.8zM255.6 396.8L259.0 394.0L261.8 394.0L261.8 396.8L260.4 400.3L256.3 399.6zM263.2 396.8L266.7 396.8L264.6 401.0L263.2 400.3zM253.5 401.7L259.0 402.4L259.0 403.1L253.5 402.4zM270.8 398.2L275.7 398.9L281.9 401.7L284.0 404.5L279.2 403.8L275.7 403.1L271.5 400.3zM263.2 384.9L264.6 384.9L266.0 388.4L267.4 391.9L266.0 393.3L264.6 390.5L263.2 387.7zM259.0 412.9L259.0 420.6L261.8 422.0L266.0 420.6L270.8 419.9L274.3 422.0L277.1 424.1L281.9 424.8L284.0 423.4L286.1 418.5L286.1 415.0L281.2 410.8L279.2 405.2L277.8 409.4L274.3 405.9L270.8 405.9L269.4 408.0L266.7 407.3L264.6 410.1zM280.5 426.2L282.6 426.2L281.9 427.6L280.5 427.6zM300.0 422.0L303.5 424.1L301.4 426.2L299.3 425.5zM299.3 426.2L300.7 426.9L297.2 430.4L295.1 429.7zM235.4 391.2L236.8 392.6L235.4 393.3zM216.0 347.8L219.5 346.4L227.1 343.6L221.6 344.3L217.4 346.4zM188.2 342.9L193.8 341.5L197.3 342.2L191.7 343.6zM120.9 382.1L124.4 381.4L128.6 383.5L125.8 383.5zM128.6 384.2L132.7 384.2L132.0 384.9L128.6 384.9zM278.5 365.3L279.2 362.5L279.2 359.7L278.5 361.1z" fill="url(#land)"/>
<circle cx="94.40" cy="364.42" r="1.40" fill="#e0553a"/>
<circle cx="95.40" cy="371.91" r="1.40" fill="#e0553a"/>
<circle cx="102.89" cy="376.15" r="1.40" fill="#e0553a"/>
<circle cx="112.37" cy="371.91" r="1.40" fill="#e0553a"/>
<circle cx="113.62" cy="373.16" r="1.40" fill="#e0553a"/>
<circle cx="121.86" cy="369.16" r="1.40" fill="#e0553a"/>
<circle cx="123.10" cy="378.65" r="1.40" fill="#e0553a"/>
<circle cx="175.51" cy="360.68" r="1.40" fill="#e0553a"/>
<circle cx="179.76" cy="361.68" r="1.40" fill="#e0553a"/>
<circle cx="188.49" cy="359.18" r="1.40" fill="#e0553a"/>
<circle cx="204.21" cy="374.65" r="1.40" fill="#e0553a"/>
<circle cx="94.90" cy="365.92" r="1.40" fill="#3a8fdc"/>
<circle cx="98.15" cy="375.15" r="1.40" fill="#3a8fdc"/>
<circle cx="112.37" cy="375.40" r="1.40" fill="#3a8fdc"/>
<circle cx="111.13" cy="384.89" r="1.40" fill="#3a8fdc"/>
<circle cx="126.10" cy="406.85" r="1.40" fill="#3a8fdc"/>
<circle cx="184.75" cy="361.93" r="1.40" fill="#3a8fdc"/>
<circle cx="191.48" cy="355.69" r="1.40" fill="#3a8fdc"/>
<circle cx="263.36" cy="401.11" r="1.40" fill="#3a8fdc"/>
<path d="M124 368l3.4-4.8h86v9.8h-86z" fill="#fff" stroke="#7aa7ea" stroke-width="0.8"/>
<text x="129.60" y="369.72" font-size="5.2" fill="#5b8fe0" textLength="59.50" lengthAdjust="spacingAndGlyphs">Yoast - Tweaking Websites</text>
<circle cx="169.80" cy="444.30" r="1.20" fill="#e0553a"/><text x="172.40" y="445.92" font-size="4.9" fill="#444" textLength="18.50" lengthAdjust="spacingAndGlyphs">1 action</text>
<circle cx="198.60" cy="444.30" r="1.20" fill="#3a8fdc"/><text x="201.40" y="445.92" font-size="4.9" fill="#444" textLength="23.50" lengthAdjust="spacingAndGlyphs">2+ actions</text>
<text x="231.60" y="445.92" font-size="4.9" fill="#6a9ae6" textLength="21.50" lengthAdjust="spacingAndGlyphs">Hide map</text>
<text x="256.80" y="445.92" font-size="4.9" fill="#6a9ae6" textLength="33.50" lengthAdjust="spacingAndGlyphs">Disable popups</text>
<text x="294.00" y="445.92" font-size="4.9" fill="#6a9ae6" textLength="12.80" lengthAdjust="spacingAndGlyphs">Zoom</text>
<line x1="323.50" y1="336.00" x2="323.50" y2="464.00" stroke="#e2e2e2" stroke-width="0.8"/>
<rect x="328.00" y="336.60" width="25.40" height="8.00" fill="#f47c20"/>
<text x="330.20" y="342.58" font-size="5.4" fill="#fff" font-weight="bold" textLength="21.00" lengthAdjust="spacingAndGlyphs">Content</text>
<text x="357.00" y="342.58" font-size="5.4" fill="#f47c20" textLength="25.00" lengthAdjust="spacingAndGlyphs">Countries</text>
<text x="386.00" y="342.58" font-size="5.4" fill="#f47c20" textLength="24.00" lengthAdjust="spacingAndGlyphs">Referrers</text>
<text x="413.60" y="342.58" font-size="5.4" fill="#f47c20" textLength="21.60" lengthAdjust="spacingAndGlyphs">Domains</text>
<text x="439.00" y="342.58" font-size="5.4" fill="#f47c20" textLength="23.00" lengthAdjust="spacingAndGlyphs">Searches</text>
<rect x="328.00" y="350.20" width="141.60" height="15.60" fill="#ececfb"/>
<text x="337.40" y="359.95" font-size="5.6" fill="#111" text-anchor="middle" font-weight="bold">6</text>
<text x="346.80" y="359.75" font-size="5" fill="#2a6fd0" textLength="88.70" lengthAdjust="spacingAndGlyphs">Social Buttons: Adding them to your site</text>
<line x1="346.80" y1="360.40" x2="435.50" y2="360.40" stroke="#2a6fd0" stroke-width="0.45"/>
<text x="337.40" y="376.10" font-size="5.6" fill="#111" text-anchor="middle" font-weight="bold">3</text>
<text x="346.80" y="375.90" font-size="5" fill="#2a6fd0" textLength="93.00" lengthAdjust="spacingAndGlyphs">WordPress SEO Plugin - Search Engine Opt</text>
<line x1="346.80" y1="376.55" x2="439.80" y2="376.55" stroke="#2a6fd0" stroke-width="0.45"/>
<rect x="328.00" y="382.50" width="141.60" height="15.60" fill="#ececfb"/>
<text x="337.40" y="392.25" font-size="5.6" fill="#111" text-anchor="middle" font-weight="bold">3</text>
<text x="346.80" y="392.05" font-size="5" fill="#2a6fd0" textLength="95.80" lengthAdjust="spacingAndGlyphs">WordPress theme - The Anatomy, an Infogr</text>
<line x1="346.80" y1="392.70" x2="442.60" y2="392.70" stroke="#2a6fd0" stroke-width="0.45"/>
<text x="337.40" y="408.40" font-size="5.6" fill="#111" text-anchor="middle" font-weight="bold">2</text>
<text x="346.80" y="408.20" font-size="5" fill="#2a6fd0" textLength="90.00" lengthAdjust="spacingAndGlyphs">WordPress SEO - The Definitive Guide - Y</text>
<line x1="346.80" y1="408.85" x2="436.80" y2="408.85" stroke="#2a6fd0" stroke-width="0.45"/>
<rect x="328.00" y="414.80" width="141.60" height="15.60" fill="#ececfb"/>
<text x="337.40" y="424.55" font-size="5.6" fill="#111" text-anchor="middle" font-weight="bold">2</text>
<text x="346.80" y="424.35" font-size="5" fill="#2a6fd0" textLength="22.50" lengthAdjust="spacingAndGlyphs">Download</text>
<line x1="346.80" y1="425.00" x2="369.30" y2="425.00" stroke="#2a6fd0" stroke-width="0.45"/>
<text x="337.40" y="440.70" font-size="5.6" fill="#111" text-anchor="middle" font-weight="bold">2</text>
<text x="346.80" y="440.50" font-size="5" fill="#2a6fd0" textLength="92.00" lengthAdjust="spacingAndGlyphs">All In One SEO Pack to WordPress SEO Mig</text>
<line x1="346.80" y1="441.15" x2="438.80" y2="441.15" stroke="#2a6fd0" stroke-width="0.45"/>
<rect x="328.00" y="447.10" width="141.60" height="15.60" fill="#ececfb"/>
<text x="337.40" y="456.85" font-size="5.6" fill="#111" text-anchor="middle" font-weight="bold">1</text>
<text x="346.80" y="456.65" font-size="5" fill="#2a6fd0" textLength="90.50" lengthAdjust="spacingAndGlyphs">WordPress Breadcrumbs, Yoast Style, get</text>
<line x1="346.80" y1="457.30" x2="437.30" y2="457.30" stroke="#2a6fd0" stroke-width="0.45"/>
<defs><linearGradient id="fadeL" x1="0" y1="0" x2="1" y2="0"><stop offset="0" stop-color="#d8d8d8"/><stop offset="0.7" stop-color="#efefef"/><stop offset="1" stop-color="#fff"/></linearGradient></defs>
<path d="M56.4 520v-33a2.6 2.6 0 0 1 2.6-2.6h80" fill="none" stroke="url(#fadeL)" stroke-width="0.9"/>
<rect x="59.80" y="492.40" width="7.20" height="5.00" fill="#c9d8f0"/><rect x="59.80" y="492.40" width="3.00" height="2.60" fill="#9db5e6"/><line x1="62.80" y1="493.40" x2="67.00" y2="493.40" stroke="#efb5b0" stroke-width="0.7"/><line x1="62.80" y1="495.00" x2="67.00" y2="495.00" stroke="#efb5b0" stroke-width="0.7"/><line x1="59.80" y1="496.60" x2="67.00" y2="496.60" stroke="#efb5b0" stroke-width="0.7"/>
<text x="59.80" y="506.22" font-size="5.2" fill="#c5d6f5" textLength="59.50" lengthAdjust="spacingAndGlyphs">Yoast - Tweaking Websites</text>
<text x="59.80" y="515.42" font-size="5.2" fill="#d2d2d2" textLength="41.00" lengthAdjust="spacingAndGlyphs">11:56pm, 1 action</text>
<line x1="59.80" y1="521.60" x2="162.00" y2="521.60" stroke="#ececec" stroke-width="0.7"/>
<rect x="59.80" y="529.00" width="7.40" height="5.00" fill="#fff"/><rect x="59.80" y="529.00" width="1.90" height="5.00" fill="#d52b1e"/><rect x="65.30" y="529.00" width="1.90" height="5.00" fill="#d52b1e"/><rect x="62.70" y="530.40" width="1.60" height="2.20" fill="#d52b1e"/>
<text x="59.80" y="542.72" font-size="5.2" fill="#5b8be0" textLength="79.50" lengthAdjust="spacingAndGlyphs">Social Buttons: Adding them to your</text>
<text x="59.80" y="551.72" font-size="5.2" fill="#8a8a8a" textLength="41.00" lengthAdjust="spacingAndGlyphs">11:56pm, 1 action</text>
<line x1="59.80" y1="558.30" x2="162.00" y2="558.30" stroke="#ececec" stroke-width="0.7"/>
<line x1="166.00" y1="484.00" x2="166.00" y2="561.00" stroke="#f3f3f3" stroke-width="0.8"/>
<rect x="175.40" y="483.40" width="294.20" height="32.10" fill="#f3f3fd"/>
<rect x="175.40" y="548.20" width="294.20" height="20.00" fill="#ececfb"/>
<text x="188.50" y="495.02" font-size="5.2" fill="#8f8f8f" textLength="27.00" lengthAdjust="spacingAndGlyphs">Jun 25 2011</text>
<text x="188.50" y="505.92" font-size="5.2" fill="#8f8f8f" textLength="29.00" lengthAdjust="spacingAndGlyphs">11:56:36 pm</text>
<rect x="228" y="491" width="36" height="5.4" rx="2.7" fill="#fff"/>
<text x="188.50" y="527.92" font-size="5.2" fill="#111" textLength="27.00" lengthAdjust="spacingAndGlyphs">Jun 25 2011</text>
<text x="188.50" y="538.92" font-size="5.2" fill="#111" textLength="29.00" lengthAdjust="spacingAndGlyphs">11:56:33 pm</text>
<text x="188.50" y="560.52" font-size="5.2" fill="#111" textLength="27.00" lengthAdjust="spacingAndGlyphs">Jun 25 2011</text>
<rect x="228" y="556.4" width="37" height="5.4" rx="2.7" fill="#fff"/>
<rect x="230.40" y="501.60" width="7.40" height="5.00" fill="#d9e2f3"/><rect x="230.40" y="501.60" width="3.00" height="2.60" fill="#aebfe6"/><line x1="233.40" y1="502.60" x2="237.80" y2="502.60" stroke="#f2c6b8" stroke-width="0.7"/><line x1="230.40" y1="505.60" x2="237.80" y2="505.60" stroke="#f2c6b8" stroke-width="0.7"/>
<path d="M241 505.6l3-4 3.4 1.2-2.2 4.4z" fill="#bcd4ee"/><path d="M243 503l3.6-1.6 1.2 2.6z" fill="#f3d9a6"/>
<circle cx="253.60" cy="503.80" r="3.40" fill="#f0d8b0"/><circle cx="253.60" cy="503.80" r="1.40" fill="#a9c6ee"/><path d="M253.6 500.4a3.4 3.4 0 0 1 3 5z" fill="#bfe0b8"/>
<rect x="230.40" y="534.20" width="7.60" height="5.20" fill="#fff"/><rect x="230.40" y="534.20" width="2.00" height="5.20" fill="#d52b1e"/><rect x="236.00" y="534.20" width="2.00" height="5.20" fill="#d52b1e"/><rect x="233.40" y="535.80" width="1.60" height="2.20" fill="#d52b1e"/>
<path d="M241.6 537a2.6 2.8 0 0 0 5.2 0c0-1.6-.8-2.6-2-2.6l-.2-1.8-.9.3.3 1.6c-1.4 0-2.4 1-2.4 2.5z" fill="#4a90e2"/>
<circle cx="253.80" cy="536.80" r="3.50" fill="#e8463a"/><path d="M253.8 536.8L250.8 538.6A3.5 3.5 0 0 0 255.4 539.9z" fill="#3aa757"/><path d="M253.8 536.8L255.4 539.9A3.5 3.5 0 0 0 257.2 536z" fill="#f7c32e"/><circle cx="253.80" cy="536.80" r="1.50" fill="#4a8af4" stroke="#fff" stroke-width="0.5"/>
<text x="282.00" y="495.02" font-size="5.2" fill="#5b8fe0">/</text><line x1="282.00" y1="495.60" x2="283.80" y2="495.60" stroke="#5b8fe0" stroke-width="0.4"/>
<text x="282.00" y="505.92" font-size="5.2" fill="#9a9a9a" textLength="59.50" lengthAdjust="spacingAndGlyphs">Yoast - Tweaking Websites</text>
<text x="282.00" y="527.92" font-size="5.2" fill="#2a6fd0" textLength="162.50" lengthAdjust="spacingAndGlyphs">/social-buttons/?utm_source=smashing&amp;utm_medium=network&amp;utm_....</text>
<line x1="282.00" y1="528.60" x2="444.50" y2="528.60" stroke="#2a6fd0" stroke-width="0.45"/>
<text x="282.00" y="538.92" font-size="5.2" fill="#222" textLength="135.50" lengthAdjust="spacingAndGlyphs">Social Buttons: Adding them to your site &amp; Tracking them - Y</text>
<text x="282.00" y="560.52" font-size="5.2" fill="#2a6fd0" textLength="53.00" lengthAdjust="spacingAndGlyphs">/articles/magento-seo/</text><line x1="282.00" y1="561.00" x2="335.00" y2="561.00" stroke="#2a6fd0" stroke-width="0.45"/>
</svg>
</body></html>
